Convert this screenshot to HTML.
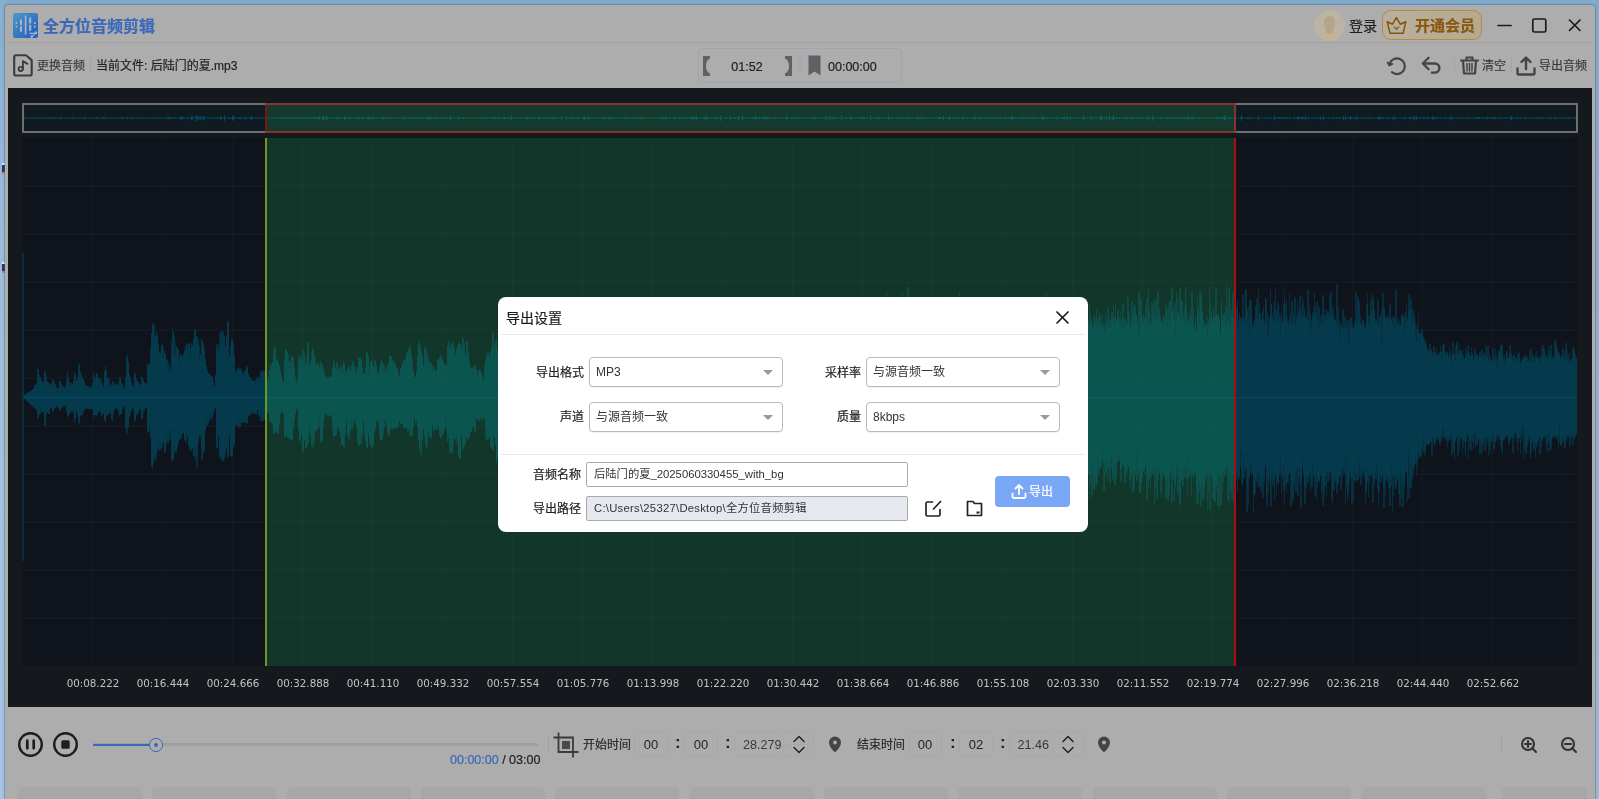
<!DOCTYPE html>
<html lang="zh-CN"><head><meta charset="utf-8"><title>全方位音频剪辑</title>
<style>
*{box-sizing:border-box;margin:0;padding:0}
html,body{width:1599px;height:799px;overflow:hidden}
body{background:#82acce;font-family:"Liberation Sans","Noto Sans CJK SC",sans-serif;font-size:12px;color:#222;position:relative}
.abs,.win *{position:absolute}
.win{position:absolute;left:5px;top:5px;width:1590px;height:810px;background:#adadad;border-radius:4px;box-shadow:0 0 0 1px rgba(70,110,150,.35),0 0 3px rgba(40,80,120,.4)}
.edgeL{position:absolute;left:0;top:0;width:6px;height:799px;background:linear-gradient(180deg,#87adcf 0,#8fb4d6 12%,#9dbcdc 30%,#a3c1e1 55%,#a6c4e4 100%)}
.edgeR{position:absolute;left:1594px;top:0;width:5px;height:799px;background:linear-gradient(180deg,#80aacd 0,#8fb2d3 50%,#9fbad5 100%)}
.mk{position:absolute;left:2px;width:3px;background:#27346b;border-top:2px solid #e8eef8;border-bottom:2px solid #c98a3a}
.t{white-space:nowrap;line-height:20px;height:20px}
.t,.nb,.col,.sel,.inp,.lab{will-change:transform}
.t{-webkit-text-stroke:.200px currentColor}
svg{position:absolute;overflow:visible}
.title{left:38px;top:12px;font-size:16px;font-weight:bold;color:#3b68b8;line-height:20px;letter-spacing:0}
.hr{left:3px;top:37px;width:1584px;height:1px;background:#a2a2a2}
.dark{left:3px;top:83px;width:1584px;height:619px;background:#15191d}
.lab span{position:absolute;top:0;width:80px;text-align:center;font-family:"DejaVu Sans","Liberation Sans",sans-serif;font-size:10.300px;color:#c2c2c2;line-height:14px}
.card{top:782px;width:124px;height:30px;border-radius:5px;background:#a7a7a7}
.nb{width:34px;height:24px;border:1px solid #a3a9b4;text-align:center;line-height:24px;font-size:13px;color:#222}
.col{font-size:17px;font-weight:bold;color:#222;line-height:24px}
.dlg{position:absolute;left:498px;top:297px;width:590px;height:235px;background:#fff;border-radius:8px}
.dlg *{position:absolute}
.sel{width:194px;height:30px;border:1px solid #b9b9b9;border-radius:4px;background:#fff;font-size:12px;line-height:29px;padding-left:6px;color:#333;box-shadow:0 1px 1px rgba(0,0,0,.06)}
.sel i{right:9px;top:12px;width:0;height:0;border-left:5px solid transparent;border-right:5px solid transparent;border-top:5px solid #999}
.lb{font-size:12px;color:#222;line-height:20px;text-align:right;width:80px}
.inp{width:322px;height:25px;border:1px solid #a9a9a9;border-radius:2px;font-size:11.300px;line-height:23px;padding-left:7px;color:#333;white-space:nowrap}
</style></head><body>
<div class="edgeL"></div><div class="edgeR"></div><div class="mk" style="top:163px;height:11px"></div><div class="mk" style="top:262px;height:11px"></div>
<div class="win">
  <!-- title bar -->
  <svg style="left:8px;top:8px" width="25" height="25" viewBox="0 0 25 25"><defs><linearGradient id="lg" x1="0" y1="0" x2="1" y2="1"><stop offset="0" stop-color="#4a9bc8"/><stop offset="1" stop-color="#2258b8"/></linearGradient></defs><rect width="25" height="25" rx="2.5" fill="url(#lg)"/><g fill="#a9b4c8"><rect x="2.6" y="9" width="1.6" height="2"/><rect x="2.6" y="12.6" width="1.6" height="2"/><rect x="7" y="6.5" width="2" height="5.5"/><rect x="7" y="13.2" width="2" height="5.5"/><rect x="11.8" y="2.5" width="1.6" height="19"/><rect x="16.2" y="4.5" width="2" height="6"/><rect x="16.2" y="11.8" width="2" height="6"/><rect x="21" y="9" width="1.6" height="2"/><rect x="21" y="12.6" width="1.6" height="2"/></g><g stroke="#dfe6f2" stroke-width="0.8" fill="none"><path d="M16.5 20.3h4.5M19 24l3-3.6"/><circle cx="22.8" cy="19.8" r="1"/><circle cx="18.6" cy="23.6" r="0.8"/></g></svg>
  <div class="t title">全方位音频剪辑</div>
  <div class="hr"></div>
  <!-- user / vip -->
  <svg style="left:1308.500px;top:5px" width="31" height="31" viewBox="0 0 31 31"><defs><clipPath id="av"><circle cx="15.500" cy="15.500" r="15.500"/></clipPath></defs><circle cx="15.500" cy="15.500" r="15.500" fill="#bbb3a5"/><g clip-path="url(#av)"><path d="M6 31c0-5 3-7.500 6.500-8.500l1-1.500h4l1 1.500c3.500 1 6.500 3.500 6.500 8.500z" fill="#c2b493"/><ellipse cx="15.500" cy="12.800" rx="5.800" ry="6.800" fill="#b5a584"/><path d="M11.500 17h8v5.500l-4 2-4-2z" fill="#b5a584"/></g></svg>
  <div class="t" style="left:1344px;top:11px;font-size:14px;color:#1e1e1e">登录</div>
  <div style="left:1377px;top:5px;width:100px;height:30px;border:1px solid #b98a3c;border-radius:9px;background:linear-gradient(90deg,#b8b09f,#b5a98f)"></div>
  <svg style="left:1381px;top:11px" width="21" height="19" viewBox="0 0 21 19" fill="none" stroke="#86540e" stroke-width="1.500" stroke-linejoin="round" stroke-linecap="round"><path d="M1.300 5.700l5.200 2.500 3.900-6.600 3.900 6.600 5.500-2.500-2.600 11.600h-13.200z"/><path d="M8.200 10.800l2.200 2.600 2.400-2.600" stroke-width="1.200"/></svg>
  <div class="t" style="left:1410px;top:11px;font-size:15px;font-weight:bold;color:#87560f">开通会员</div>
  <svg style="left:1492px;top:13px" width="90" height="16" viewBox="0 0 90 16" fill="none" stroke="#1c1c1c" stroke-width="1.700" stroke-linecap="round"><path d="M1 7.500h13"/><rect x="35.800" y="1" width="13" height="13" rx="1.500"/><path d="M72.500 2l10.500 10.500M83 2l-10.500 10.500"/></svg>
  <!-- toolbar left -->
  <svg style="left:8px;top:49px" width="20" height="23" viewBox="0 0 20 23" fill="none" stroke="#3b3c40" stroke-width="2.1" stroke-linejoin="round"><path d="M3 1.300h10l5.700 4.800v13.600a1.800 1.800 0 0 1-1.800 1.800h-13.900a1.800 1.800 0 0 1-1.800-1.800v-16.600a1.800 1.800 0 0 1 1.800-1.800z"/><circle cx="7.700" cy="15" r="2.100" stroke-width="1.900"/><path d="M9.900 15v-7.800l4.600 2.600" stroke-width="1.900" stroke-linecap="round"/></svg>
  <div class="t" style="left:32px;top:51px;color:#3c3c3c">更换音频</div>
  <div style="left:85px;top:53px;width:1px;height:15px;background:#a0a0a0"></div>
  <div class="t" style="left:91px;top:51px;color:#1e1e1e">当前文件: 后陆门的夏.mp3</div>
  <!-- toolbar center -->
  <div style="left:693px;top:43px;width:204px;height:35px;border:1px solid #a2a4ae;border-radius:4px"></div>
  <svg style="left:698px;top:51px" width="10" height="20" viewBox="0 0 10 20" fill="#5f6166"><path d="M0 0h7v2.500c-3 1.500-4 4-4 7.500s1 6 4 7.500v2.500h-7z"/></svg>
  <div class="t" style="left:712px;top:52px;width:60px;text-align:center;font-size:12.500px;color:#222">01:52</div>
  <svg style="left:779px;top:51px" width="10" height="20" viewBox="0 0 10 20" fill="#5f6166"><path d="M8 0h-7v2.500c3 1.500 4 4 4 7.500s-1 6-4 7.500v2.500h7z"/></svg>
  <div style="left:794px;top:51px;width:2px;height:19px;background:#a6a8ae"></div>
  <svg style="left:803px;top:50px" width="13" height="21" viewBox="0 0 13 21" fill="#5f6166"><path d="M0.500 0.500h12v20l-6-4-6 4z"/></svg>
  <div class="t" style="left:823px;top:52px;font-size:12.500px;color:#222">00:00:00</div>
  <!-- toolbar right -->
  <svg style="left:1381px;top:50px" width="22" height="22" viewBox="0 0 22 22" fill="none" stroke="#434448" stroke-width="2.200" stroke-linecap="round" stroke-linejoin="round"><path d="M3.400 9.600a7.800 7.800 0 1 1 2.600 7.600"/><path d="M1.700 7.500l1.600 2.900 2.900-1.500" stroke-width="1.900"/></svg>
  <svg style="left:1416px;top:50px" width="22" height="22" viewBox="0 0 22 22" fill="none" stroke="#434448" stroke-width="2.300" stroke-linecap="round" stroke-linejoin="round"><path d="M7.600 2.800l-5.800 5.700 5.800 5.700"/><path d="M2.600 8.500h11.200a4.600 4.600 0 0 1 0 9.200h-3"/></svg>
  <div style="left:1449px;top:53px;width:1px;height:15px;background:#a3a3a3"></div>
  <svg style="left:1455px;top:51px" width="19" height="19" viewBox="0 0 19 19" fill="none" stroke="#434448" stroke-width="2.200" stroke-linecap="round" stroke-linejoin="round"><path d="M1 4.500h17M6.500 4v-2.500h6v2.500M3 4.500l1 13h11l1-13"/><path d="M7 7.500v7.500M9.500 7.500v7.500M12 7.500v7.500" stroke-width="1.500"/></svg>
  <div class="t" style="left:1477px;top:51px;color:#3c3c3c">清空</div>
  <div style="left:1506px;top:53px;width:1px;height:15px;background:#a3a3a3"></div>
  <svg style="left:1511px;top:51px" width="20" height="20" viewBox="0 0 20 20" fill="none" stroke="#434448" stroke-width="2.400" stroke-linecap="round" stroke-linejoin="round"><path d="M10 13v-11M5.500 6l4.500-4.500 4.500 4.500M1.500 12.500v4.500a1.500 1.500 0 0 0 1.500 1.500h14a1.500 1.500 0 0 0 1.500-1.500v-4.500"/></svg>
  <div class="t" style="left:1534px;top:51px;color:#3c3c3c">导出音频</div>

  <!-- dark waveform panel -->
  <div class="dark"></div>
  <div class="lab" style="left:-5px;top:671px;width:1599px;height:14px"><span style="left:53px">00:08.222</span><span style="left:123px">00:16.444</span><span style="left:193px">00:24.666</span><span style="left:263px">00:32.888</span><span style="left:333px">00:41.110</span><span style="left:403px">00:49.332</span><span style="left:473px">00:57.554</span><span style="left:543px">01:05.776</span><span style="left:613px">01:13.998</span><span style="left:683px">01:22.220</span><span style="left:753px">01:30.442</span><span style="left:823px">01:38.664</span><span style="left:893px">01:46.886</span><span style="left:963px">01:55.108</span><span style="left:1033px">02:03.330</span><span style="left:1103px">02:11.552</span><span style="left:1173px">02:19.774</span><span style="left:1243px">02:27.996</span><span style="left:1313px">02:36.218</span><span style="left:1383px">02:44.440</span><span style="left:1453px">02:52.662</span></div>
  <!-- bottom controls -->
  <svg style="left:12px;top:726px" width="62" height="27" viewBox="0 0 62 27" fill="none" stroke="#1e1e1e" stroke-width="2.400"><circle cx="13.500" cy="13.500" r="11.300"/><circle cx="48.500" cy="13.500" r="11.300"/><path d="M10.300 9.700v7.600M16.700 9.700v7.600" stroke-linecap="round" stroke-width="2.700"/><rect x="44.300" y="9.300" width="8.400" height="8.400" rx="1.500" fill="#1e1e1e" stroke="none"/></svg>
  <div style="left:88px;top:738px;width:445px;height:3px;background:#9f9f9f;border-radius:2px"></div>
  <div style="left:88px;top:739px;width:58px;height:2px;background:#3c68b8"></div>
  <svg style="left:143px;top:732px" width="16" height="16" viewBox="0 0 16 16"><circle cx="8" cy="8" r="6.600" fill="#adadad" stroke="#3c68b8" stroke-width="1"/><circle cx="8" cy="8" r="2" fill="#3c68b8"/></svg>
  <div class="t" style="left:445px;top:745px;font-size:12.500px;color:#222"><span style="position:static;color:#3c68b8">00:00:00</span> / 03:00</div>
  <div style="left:543px;top:729px;width:1px;height:20px;background:#a0a0a0"></div>
  <svg style="left:548px;top:727px" width="26" height="26" viewBox="0 0 26 26" fill="none" stroke="#3a3a3a" stroke-width="1.800"><path d="M5.500 0.500v19.500h20M0.500 5.500h19.500v20"/><rect x="9" y="9" width="8" height="8" fill="#4a4a4a" stroke="none"/></svg>
  <div class="t" style="left:578px;top:730px;color:#2a2a2a">开始时间</div>
  <div class="nb" style="left:629px;top:727px">00</div><div class="col" style="left:670px;top:726px">:</div>
  <div class="nb" style="left:679px;top:727px">00</div><div class="col" style="left:720px;top:726px">:</div>
  <div class="nb" style="left:729px;top:727px;width:80px;text-align:left;padding-left:8px;font-size:12.600px;color:#3a3a3a">28.279</div>
  <div style="left:778px;top:727px;width:1px;height:24px;background:#a4a9b3"></div><div style="left:779px;top:739px;width:29px;height:1px;background:#a4a9b3"></div>
  <svg style="left:787px;top:730px" width="14" height="19" viewBox="0 0 14 19" fill="none" stroke="#222" stroke-width="1.500" stroke-linecap="round" stroke-linejoin="round"><path d="M2 6.500l5-5 5 5M2 12.500l5 5 5-5"/></svg>
  <svg style="left:823px;top:731px" width="14" height="17" viewBox="0 0 14 17"><path d="M7 0.500a6 6 0 0 1 6 6c0 4.500-6 10-6 10s-6-5.500-6-10a6 6 0 0 1 6-6z" fill="#444"/><circle cx="7" cy="6.500" r="2" fill="#adadad"/></svg>
  <div class="t" style="left:852px;top:730px;color:#2a2a2a">结束时间</div>
  <div class="nb" style="left:903px;top:727px">00</div><div class="col" style="left:945px;top:726px">:</div>
  <div class="nb" style="left:954px;top:727px">02</div><div class="col" style="left:995px;top:726px">:</div>
  <div class="nb" style="left:1004px;top:727px;width:75px;text-align:left;padding-left:7.500px;font-size:12.600px;color:#3a3a3a">21.46</div>
  <div style="left:1048px;top:727px;width:1px;height:24px;background:#a4a9b3"></div><div style="left:1049px;top:739px;width:29px;height:1px;background:#a4a9b3"></div>
  <svg style="left:1056px;top:730px" width="14" height="19" viewBox="0 0 14 19" fill="none" stroke="#222" stroke-width="1.500" stroke-linecap="round" stroke-linejoin="round"><path d="M2 6.500l5-5 5 5M2 12.500l5 5 5-5"/></svg>
  <svg style="left:1092px;top:731px" width="14" height="17" viewBox="0 0 14 17"><path d="M7 0.500a6 6 0 0 1 6 6c0 4.500-6 10-6 10s-6-5.500-6-10a6 6 0 0 1 6-6z" fill="#444"/><circle cx="7" cy="6.500" r="2" fill="#adadad"/></svg>
  <div style="left:1496px;top:730px;width:1px;height:19px;background:#a0a0a0"></div>
  <svg style="left:1515px;top:731px" width="60" height="18" viewBox="0 0 60 18" fill="none" stroke="#333" stroke-width="2.100" stroke-linecap="round"><circle cx="8" cy="8" r="6"/><path d="M12.500 12.500l3.500 3.500M5 8h6M8 5v6"/><circle cx="48" cy="8" r="6"/><path d="M52.500 12.500l3.500 3.500M45 8h6"/></svg>
  <div class="card" style="left:13.0px"></div><div class="card" style="left:147.3px"></div><div class="card" style="left:281.7px"></div><div class="card" style="left:416.0px"></div><div class="card" style="left:550.4px"></div><div class="card" style="left:684.8px"></div><div class="card" style="left:819.1px"></div><div class="card" style="left:953.4px"></div><div class="card" style="left:1087.8px"></div><div class="card" style="left:1222.1px"></div><div class="card" style="left:1356.5px"></div><div class="card" style="left:1496.500px;width:85px"></div>
</div>

<!-- waveform svg in page coords -->
<svg style="left:0;top:0" width="1599" height="799" viewBox="0 0 1599 799">
  <defs>
    <path id="wa" d="M23 397V395.9h1V395.1h1V394.2h1V393.5h1V392.7h1V392h1V391.4h1V390.9h1V390.3h1V389.7h1V388.7h1V385.2h1V385.5h1V383.7h1V368.5h1V369.6h1V374.9h1V377.3h1V380.4h1V381.6h1V381.2h1V371.8h1V371.1h1V377.3h1V381.6h1V382.3h1V382.9h1V385.1h1V383.6h1V379.3h1V380.1h1V382.3h1V385h1V386.7h1V388.1h1V388.1h1V380.8h1V380.7h1V384h1V385.7h1V386.4h1V386.8h1V387.7h1V380.6h1V371.9h1V377.6h1V382.2h1V382.3h1V383h1V383.7h1V380.9h1V371.8h1V374.2h1V379.8h1V377.6h1V363h1V365.6h1V374.3h1V374.3h1V377.6h1V378.9h1V381h1V384.8h1V385.5h1V385.6h1V386h1V387.1h1V387.6h1V387.1h1V384.9h1V373.4h1V375.9h1V377.7h1V373.2h1V374.4h1V377.5h1V378.2h1V379.3h1V379.6h1V383.2h1V386.4h1V369.9h1V366.6h1V371.1h1V378.2h1V377.6h1V380.5h1V386.7h1V384h1V381.3h1V381.8h1V381.9h1V383.8h1V384.8h1V384.6h1V382.7h1V376.6h1V378.2h1V382.4h1V383.4h1V385.9h1V388.4h1V377.4h1V357.8h1V355.5h1V361.5h1V374.5h1V377.8h1V382.1h1V385h1V386.5h1V372.3h1V374.3h1V378.4h1V382.4h1V381.7h1V384.2h1V384.3h1V376.7h1V377.6h1V379.9h1V382.4h1V383h1V383.7h1V364.4h1V364h1V365h1V349.8h1V333.4h1V324.1h1V324.8h1V325.1h1V337h1V332h1V335.3h1V343.8h1V351.9h1V353.2h1V344.4h1V345.6h1V346.8h1V351.1h1V354.4h1V359.3h1V360.7h1V362.3h1V365.2h1V369.9h1V351.9h1V327.6h1V331.8h1V335.4h1V342.8h1V347.1h1V348h1V349.3h1V356.6h1V354.3h1V356.6h1V355.9h1V354.2h1V349.4h1V346.7h1V343.7h1V344.1h1V343.9h1V343.8h1V348h1V342.9h1V344.7h1V338.1h1V329.9h1V328.9h1V335.9h1V336.9h1V339.3h1V346.1h1V354.3h1V338.8h1V340.5h1V343.1h1V348.7h1V358.2h1V366.7h1V371.2h1V372.9h1V373.9h1V374.5h1V375.5h1V377.2h1V381.7h1V385.9h1V375.3h1V344.4h1V348.3h1V345.6h1V334.3h1V331.3h1V331.4h1V331.7h1V332h1V335.2h1V345.4h1V336.5h1V323.1h1V320.6h1V355.8h1V356.3h1V337.7h1V339.5h1V342.4h1V356h1V371.4h1V371.1h1V368.8h1V367.7h1V366.9h1V367.9h1V370h1V372.8h1V372.5h1V371.8h1V369.9h1V365h1V367.1h1V373.9h1V376.4h1V377.7h1V378.5h1V380.1h1V381.2h1V380.7h1V379.8h1V378.9h1V377.3h1V376.8h1V376.8h1V371.8h1V370.3h1V370.1h1V370.9h1V370.8h1V371.7h1V376.2h1V380.4h1V376.1h1V370.8h1V363.7h1V365.3h1V361.8h1V349.6h1V345.7h1V348.5h1V359h1V359h1V362.4h1V365.5h1V370.6h1V376.7h1V381.1h1V383h1V358.8h1V349.1h1V350.9h1V353.7h1V354.6h1V360.2h1V361.8h1V355.9h1V356.9h1V356.5h1V367.7h1V376.9h1V382.7h1V379.1h1V358.2h1V354.8h1V355.7h1V357.6h1V348.8h1V349.8h1V353.7h1V364.6h1V356.8h1V342.5h1V342.8h1V363.7h1V361.2h1V352h1V349.3h1V349.1h1V355.6h1V356.6h1V364h1V362.8h1V364.1h1V367.4h1V361.2h1V368.8h1V364.6h1V368.6h1V374.1h1V377.1h1V379.3h1V376.7h1V377.2h1V376.8h1V377.3h1V374.6h1V367.8h1V359.4h1V360.7h1V367.8h1V372h1V363.1h1V370h1V368.7h1V365.5h1V368.1h1V364.7h1V361.6h1V363.3h1V370.2h1V369.4h1V370.1h1V365.7h1V367.5h1V370.7h1V365.1h1V360.8h1V362.8h1V366.2h1V367.7h1V371.1h1V367.4h1V357.8h1V358h1V357.4h1V361.1h1V368.2h1V373.5h1V373.7h1V367.4h1V351.6h1V352.6h1V356.5h1V366.4h1V362.7h1V360.4h1V361.6h1V367.3h1V359.6h1V360.8h1V365.5h1V372.2h1V371.2h1V368.2h1V364.5h1V359.9h1V361.7h1V363.9h1V365.7h1V371.4h1V368.4h1V365.3h1V361.7h1V355.3h1V355.9h1V356.3h1V359h1V361.5h1V362.3h1V364.5h1V367.2h1V368.2h1V371.2h1V376.1h1V368.5h1V366.9h1V363.6h1V360.2h1V359.5h1V357h1V352.2h1V351.2h1V349.5h1V346.1h1V346.8h1V354.2h1V361.7h1V370.5h1V376.9h1V376.4h1V371.3h1V355.2h1V344.1h1V341.7h1V345.8h1V352h1V355.6h1V366.2h1V347.8h1V347.7h1V349.1h1V354h1V368.4h1V361.4h1V363h1V364h1V365.3h1V366.5h1V369.5h1V371.4h1V369h1V360.2h1V359.5h1V357.3h1V356h1V357.1h1V360.2h1V361.8h1V364.2h1V364.4h1V364.9h1V345.7h1V345.1h1V341.6h1V346.8h1V344.4h1V341.5h1V342.4h1V348.9h1V353.5h1V349.1h1V344.8h1V343.9h1V343.9h1V343.4h1V347h1V336.5h1V339.1h1V342.2h1V354.7h1V340.2h1V340.6h1V351.4h1V360.5h1V366.1h1V368.3h1V367.4h1V366h1V364.2h1V367.2h1V370.3h1V374.2h1V371h1V369.4h1V369.3h1V372.6h1V376.8h1V380h1V364.4h1V360.2h1V354.3h1V351.3h1V352.8h1V356.7h1V352.6h1V348h1V333.4h1V331.3h1V345.4h1V340.2h1V339.7h1V348.2h1V357h1V359.9h1V354.2h1V354.2h1V357.1h1V356.2h1V359.3h1V356.8h1V345.7h1V345.7h1V354.4h1V358h1V356.3h1V356.3h1V356.8h1V356.6h1V355.3h1V358.2h1V360.9h1V361.6h1V352.6h1V352.6h1V355.9h1V333.7h1V333.7h1V346.6h1V353.9h1V341.2h1V334.8h1V348.5h1V355.8h1V359.3h1V359.4h1V335.3h1V335.3h1V347.7h1V337.6h1V337.6h1V346.7h1V352.5h1V346.1h1V346.1h1V353.5h1V342.4h1V350.4h1V354.3h1V357.8h1V332.5h1V342.2h1V339h1V339h1V348.1h1V332.6h1V349.6h1V336.6h1V344.9h1V338.5h1V342.8h1V349.7h1V343.5h1V348.3h1V349.1h1V357.3h1V352.8h1V337h1V345.8h1V350.8h1V352.1h1V352.1h1V353.9h1V352.7h1V350.5h1V347.1h1V347.1h1V350.3h1V354.4h1V354.5h1V350.9h1V350.2h1V349.9h1V352.2h1V351.1h1V337.6h1V345.3h1V348.8h1V353.3h1V354.5h1V350.5h1V349.2h1V354h1V353.6h1V345.4h1V349.2h1V348h1V334.2h1V334.2h1V345.8h1V327.5h1V338.5h1V345.5h1V349.9h1V352.7h1V332.3h1V342.4h1V334.5h1V344.1h1V323.3h1V323.3h1V334.3h1V341.7h1V346.6h1V342.9h1V334.9h1V332.9h1V343.9h1V341.2h1V346.5h1V340.8h1V340.8h1V347.1h1V345.7h1V351.5h1V345.1h1V348.7h1V339.5h1V339.5h1V346.7h1V335h1V335h1V351.7h1V324.2h1V342.3h1V359.5h1V350.4h1V351.5h1V351.1h1V332.2h1V332.2h1V321.7h1V333.5h1V340.2h1V333.4h1V333.4h1V340.8h1V340.8h1V345.2h1V324.5h1V324.5h1V341.8h1V349.3h1V348h1V348.6h1V347.5h1V319.5h1V319.5h1V334.4h1V342.7h1V343.7h1V349.8h1V317.3h1V317.3h1V335.8h1V336.1h1V336.1h1V342.9h1V326.9h1V326.9h1V342.7h1V344.8h1V342.8h1V341.2h1V338.9h1V338.9h1V356h1V338.9h1V344.7h1V346h1V327.9h1V327.9h1V336.5h1V342h1V327.3h1V327.3h1V323.6h1V334.2h1V335.6h1V340.8h1V319.6h1V319.6h1V329.8h1V336.8h1V340.1h1V336.4h1V339.7h1V345.7h1V328.5h1V336.8h1V342h1V344.6h1V348.5h1V340.6h1V339.1h1V316.9h1V316.9h1V330.3h1V338.3h1V339.1h1V320.7h1V320.7h1V331.6h1V332.7h1V352.4h1V338.7h1V342.6h1V331.3h1V335.4h1V327.6h1V327.6h1V335.2h1V340.2h1V340.9h1V344.8h1V346.5h1V323.9h1V337.8h1V349.6h1V339h1V345.9h1V338.6h1V342.2h1V343.8h1V316h1V316h1V329.9h1V315.4h1V315.4h1V333.8h1V339.1h1V336.6h1V340.6h1V315.4h1V315.4h1V329.4h1V337.5h1V341.9h1V343.2h1V329.9h1V329.9h1V336.3h1V336.3h1V337.7h1V328.5h1V327.6h1V332.6h1V337.3h1V338.6h1V326h1V326h1V333.4h1V336h1V341.5h1V335.5h1V320.8h1V320.8h1V330.1h1V330.1h1V340.3h1V339.7h1V337h1V336.7h1V336.7h1V316.2h1V326.2h1V332.9h1V337.4h1V315.2h1V315.2h1V327.2h1V334.6h1V338.3h1V339.6h1V339.5h1V338.5h1V336.6h1V338.2h1V334.7h1V337.7h1V332.3h1V332.3h1V313.6h1V328h1V335.9h1V322.7h1V338.9h1V339.9h1V315.3h1V315.3h1V327.7h1V315.1h1V315.1h1V326.2h1V347.2h1V333.7h1V334h1V339.3h1V332.6h1V337.5h1V332h1V334.4h1V332.2h1V332.2h1V335.4h1V339.2h1V331.8h1V325.2h1V325.2h1V329.4h1V335.8h1V338.6h1V340.6h1V306h1V318.4h1V326.7h1V330h1V336.2h1V309.8h1V309.8h1V333.6h1V335.5h1V354.9h1V337h1V327.9h1V321.7h1V321.7h1V329.4h1V318.8h1V318.8h1V328.2h1V330.9h1V322.1h1V312.9h1V341h1V325.9h1V325.9h1V334.6h1V339.3h1V319h1V319h1V343.9h1V324.1h1V324.1h1V346.1h1V322.4h1V322.4h1V330.1h1V329.3h1V339h1V338.5h1V327h1V303.3h1V303.3h1V325.4h1V328.5h1V328.5h1V334.1h1V332.7h1V309.8h1V322.4h1V330h1V327.9h1V332.8h1V327.4h1V336.7h1V324.6h1V330.7h1V326.9h1V302.7h1V326.6h1V332.7h1V307.1h1V307.1h1V319.3h1V298.6h1V322.6h1V332.7h1V328.2h1V327.7h1V329.4h1V291h1V338.6h1V320.4h1V331.6h1V333.7h1V331.8h1V329.3h1V331.2h1V335.5h1V326.2h1V335.9h1V334.1h1V331.6h1V325.8h1V321.7h1V327h1V292h1V313.6h1V323.1h1V329h1V326.8h1V286h1V289h1V327.9h1V331.9h1V332.7h1V308.6h1V324h1V322.3h1V325.1h1V332.3h1V333.2h1V328.6h1V326.2h1V331.2h1V325.9h1V308.2h1V320.3h1V306h1V318.7h1V326.4h1V330.4h1V317.5h1V309.9h1V302h1V302h1V313.7h1V323.4h1V324.5h1V330.4h1V328.7h1V331.7h1V333.1h1V324h1V326h1V299.1h1V299.1h1V311.8h1V320.3h1V300.9h1V295.9h1V312h1V313.9h1V313.9h1V322h1V326.1h1V307.5h1V327.9h1V317h1V323.4h1V327.8h1V330.8h1V305.4h1V292h1V325.7h1V330h1V324.9h1V319.4h1V316h1V323h1V326.6h1V325.6h1V324.1h1V331.3h1V304.3h1V304.3h1V318.3h1V303.8h1V316.8h1V324.6h1V327h1V309.5h1V319.5h1V325.8h1V326.2h1V316h1V316h1V326.5h1V323.7h1V324.9h1V325.7h1V306.5h1V306.5h1V326h1V323h1V329.7h1V328h1V331.5h1V315.3h1V331.1h1V317.9h1V323.9h1V323.5h1V327h1V329.5h1V325.6h1V302.7h1V302.7h1V316.4h1V324.5h1V335.6h1V326.8h1V320.6h1V320.6h1V321h1V321h1V339.1h1V310.8h1V310.8h1V318.7h1V335.7h1V311.3h1V313.3h1V298.5h1V311h1V319.3h1V324.8h1V328.4h1V324.5h1V328.3h1V297.7h1V297.7h1V310h1V318.2h1V323.8h1V308.2h1V301.1h1V317.9h1V325.9h1V323h1V322.6h1V314.3h1V327.6h1V296.1h1V296.1h1V315h1V324.7h1V320h1V320h1V328.9h1V293h1V311.3h1V320.6h1V320.4h1V320.5h1V323.2h1V322.2h1V326.1h1V322.1h1V322.1h1V320.8h1V310.8h1V310.8h1V320.7h1V324.4h1V322.2h1V306.9h1V306.9h1V338.1h1V326.1h1V320.3h1V322.2h1V322.6h1V321.6h1V323.6h1V324.1h1V326h1V318.6h1V301.6h1V294h1V313.4h1V313.4h1V321.1h1V316.3h1V316.3h1V318.4h1V328.2h1V310.6h1V310.6h1V320.9h1V323.1h1V310.1h1V318.8h1V302.4h1V313.4h1V320.2h1V324.5h1V327.2h1V314.8h1V319.1h1V323.3h1V317.2h1V317.2h1V324.3h1V325.3h1V327h1V314.7h1V323.3h1V333.1h1V313.6h1V320.8h1V307.6h1V307.6h1V319.1h1V325.6h1V320.8h1V319.6h1V318.7h1V326.6h1V317.6h1V321.5h1V319.4h1V320.6h1V322.9h1V311h1V319.5h1V304.1h1V304.1h1V332.3h1V319.6h1V324.8h1V297.5h1V297.5h1V312.6h1V330.3h1V301h1V301h1V326.9h1V306.2h1V306.2h1V315h1V320.7h1V290.7h1V290.7h1V308.1h1V318h1V323.1h1V314.1h1V318.1h1V311.6h1V298.5h1V298.5h1V310.3h1V312.3h1V322.6h1V325.6h1V314.8h1V304.3h1V300.2h1V300.2h1V318.3h1V319.4h1V315.1h1V316.5h1V321.8h1V321.3h1V318.5h1V315.5h1V315.1h1V304.7h1V304.7h1V310.1h1V303.4h1V300.2h1V300.2h1V287.8h1V287.8h1V308.4h1V319.1h1V333.2h1V318.7h1V298.3h1V311.3h1V288.2h1V288.2h1V300.9h1V321.6h1V316.6h1V307.8h1V290.4h1V304.3h1V313.4h1V319.4h1V322.2h1V325.6h1V291.9h1V291.9h1V305.6h1V329.4h1V316.1h1V333.9h1V294.7h1V312.3h1V291h1V291h1V294.2h1V311h1V320h1V320.7h1V327h1V324.8h1V339h1V326.2h1V286.8h1V302.1h1V312h1V324.5h1V307.4h1V317.1h1V289.3h1V289.3h1V316.8h1V316h1V318.2h1V330.9h1V299h1V320.9h1V313.7h1V313.2h1V317.9h1V327.1h1V317.6h1V289h1V289h1V303.3h1V311.1h1V311.1h1V317.1h1V321.2h1V295h1V307.1h1V300.6h1V321.5h1V312.9h1V317.4h1V323.4h1V319.3h1V319.8h1V324.4h1V290h1V290h1V308.5h1V306.4h1V299.3h1V299.3h1V313.9h1V321.8h1V326h1V319.9h1V306h1V306h1V317.1h1V323.4h1V313.5h1V313.5h1V321.2h1V312.4h1V307.3h1V320.6h1V297.7h1V297.7h1V310.8h1V335.5h1V323.6h1V318h1V304.5h1V319h1V305.1h1V300.8h1V310.5h1V316.8h1V321.5h1V306.1h1V318.2h1V332.7h1V310.7h1V320.9h1V320.8h1V289.3h1V304.3h1V299.7h1V316.2h1V320.4h1V293.3h1V313.7h1V322.9h1V324.8h1V317h1V323.4h1V324.6h1V322.3h1V317h1V317h1V313.1h1V313.1h1V317.3h1V317.3h1V301.6h1V311.1h1V317.5h1V315h1V319.9h1V320h1V312.8h1V333.8h1V319.2h1V318.7h1V312.3h1V312.3h1V316h1V302.1h1V302.1h1V330.6h1V321.6h1V325.8h1V314.3h1V316.1h1V326.6h1V315.7h1V318.1h1V310.2h1V310.2h1V312.6h1V295.2h1V308.8h1V317.1h1V315.2h1V319.8h1V322.3h1V320.9h1V322.7h1V325.2h1V326h1V330.5h1V339.4h1V322.8h1V309h1V309h1V316.4h1V316.4h1V318.9h1V325.4h1V337.7h1V342.7h1V317.7h1V317.7h1V323.3h1V327.8h1V320.4h1V319.4h1V321.9h1V324.3h1V301.3h1V301.3h1V314.9h1V322.6h1V324.7h1V320.2h1V327.5h1V328.3h1V303.9h1V303.9h1V315.6h1V322.4h1V299.9h1V291.7h1V319.1h1V301.5h1V310.2h1V322.2h1V319h1V299.5h1V299.5h1V317.5h1V315.6h1V342.6h1V292.9h1V292.9h1V308h1V317.2h1V316.8h1V325.7h1V319.3h1V318.3h1V319.7h1V320.1h1V317.4h1V315.1h1V333h1V289.1h1V289.1h1V317.1h1V323.1h1V326.1h1V325h1V315h1V315h1V315.8h1V334.7h1V316.9h1V304.2h1V317.3h1V294.5h1V294.5h1V308h1V316.7h1V322.3h1V315.3h1V315.3h1V321.6h1V341.6h1V328.9h1V330.8h1V332.1h1V333h1V328.5h1V329h1V336.7h1V342h1V345.3h1V347.5h1V348.9h1V349.8h1V350.4h1V350.7h1V351.7h1V355.5h1V352.5h1V352.6h1V352.6h1V348h1V355.4h1V352.7h1V352.7h1V346.4h1V358.4h1V352h1V344h1V344h1V350.4h1V351.9h1V351.9h1V358h1V358.9h1V356.8h1V364.8h1V353.9h1V354.1h1V356.4h1V360.4h1V341.3h1V341.3h1V350.7h1V354.3h1V351h1V351h1V361.8h1V354.9h1V360h1V358.5h1V350.8h1V354.1h1V345.3h1V351.9h1V356.1h1V346.9h1V354.5h1V358.7h1V355.5h1V356.5h1V354.2h1V354.2h1V355.4h1V355.4h1V357.8h1V349.8h1V349.8h1V354.8h1V353.3h1V357.9h1V355.5h1V357.8h1V360.8h1V358.2h1V362.4h1V359.4h1V362.8h1V360.6h1V356.8h1V348.2h1V366.3h1V359.1h1V349.9h1V355.6h1V344.5h1V344.5h1V355.6h1V360.7h1V363h1V359.1h1V351h1V351h1V357.8h1V345h1V345h1V351.7h1V362.2h1V360.1h1V353.2h1V357.5h1V357.7h1V354.5h1V354.5h1V358.6h1V364.3h1V362.6h1V360.1h1V356h1V356h1V352.9h1V357h1V356.1h1V359.2h1V360.2h1V361.2h1V362.2h1V353.6h1V357.1h1V356h1V360.7h1V350.9h1V356.7h1V359.8h1V361.5h1V355.2h1V348.2h1V356.6h1V348.5h1V348.5h1V354.2h1V355.1h1V357.1h1V345.7h1V354.5h1V344.9h1V344.9h1V356.8h1V355.8h1V356.5h1V340.4h1V340.4h1V350h1V352.3h1V352.3h1V360.5h1V357.9h1V348.9h1V348.9h1V353.6h1V361.2h1V356.5h1V360.4h1V361.9h1V362h1V358.9h1V358.3h1V362.3h1V348.3h1V348.3h1V354h1V357.7h1V397V434.5h-1V432.5h-1V438.8h-1V432.6h-1V437.2h-1V437.7h-1V437.1h-1V436.9h-1V436.8h-1V436.6h-1V435.1h-1V439.1h-1V446.6h-1V439.4h-1V437.1h-1V445h-1V445h-1V425.4h-1V435.8h-1V440.8h-1V436.3h-1V436h-1V438h-1V437h-1V438.5h-1V449.3h-1V449.3h-1V434h-1V441.2h-1V435.1h-1V438.2h-1V443.4h-1V436.2h-1V437.4h-1V439.6h-1V439.8h-1V436.8h-1V435.8h-1V438h-1V441.4h-1V443.1h-1V443.1h-1V440.7h-1V449.8h-1V438.5h-1V440.4h-1V458.2h-1V439.4h-1V434.9h-1V440.3h-1V452.9h-1V452.9h-1V438.2h-1V426.9h-1V437.7h-1V443.3h-1V453.3h-1V438.5h-1V438.5h-1V450.9h-1V442.4h-1V434.3h-1V438.8h-1V454.5h-1V451.9h-1V436.9h-1V439h-1V441.2h-1V441.2h-1V434.2h-1V435.9h-1V438.5h-1V440.3h-1V440.4h-1V455h-1V451.5h-1V439.2h-1V436.7h-1V435h-1V442.2h-1V438.4h-1V440.1h-1V449.2h-1V449.2h-1V434.9h-1V434.1h-1V440.8h-1V450.5h-1V439.1h-1V441.7h-1V447.2h-1V451h-1V451h-1V439.2h-1V441.8h-1V447.5h-1V453.9h-1V453.9h-1V439.2h-1V443.6h-1V436h-1V432h-1V433.1h-1V440.3h-1V442.2h-1V450.7h-1V450.7h-1V437.7h-1V435h-1V434.2h-1V433.7h-1V456.6h-1V438.5h-1V440.7h-1V438.1h-1V436.6h-1V440.6h-1V450.5h-1V434.4h-1V440.4h-1V437.5h-1V441.6h-1V460h-1V452.6h-1V454.9h-1V454.9h-1V439.7h-1V438.8h-1V437.6h-1V438.6h-1V441.4h-1V438.3h-1V438.6h-1V427h-1V429.7h-1V440.8h-1V436.6h-1V442.5h-1V440.8h-1V438.2h-1V438.5h-1V438.3h-1V446.6h-1V438.8h-1V437.6h-1V442.1h-1V442.5h-1V443.8h-1V444h-1V444h-1V442.9h-1V455.8h-1V455.8h-1V435.7h-1V442h-1V447.9h-1V456.5h-1V457.1h-1V450.4h-1V460.5h-1V461.2h-1V464h-1V468.3h-1V474.7h-1V466.3h-1V476.1h-1V487.7h-1V498.7h-1V498.7h-1V501.8h-1V472.7h-1V473.2h-1V481.7h-1V497.3h-1V477.9h-1V498.8h-1V506.4h-1V506.4h-1V474h-1V480h-1V488.9h-1V488.9h-1V485.6h-1V496.4h-1V512.6h-1V466.7h-1V487.4h-1V487.4h-1V477.2h-1V478.1h-1V480.3h-1V494.4h-1V486.6h-1V486.6h-1V475.9h-1V477.1h-1V473.9h-1V474.3h-1V489.2h-1V489.2h-1V479.1h-1V470.7h-1V477.9h-1V478.4h-1V475.1h-1V473.3h-1V469.7h-1V475.2h-1V475.1h-1V480.9h-1V489.8h-1V503.3h-1V478.3h-1V474.3h-1V468h-1V471.3h-1V473.9h-1V477.1h-1V480.1h-1V481.5h-1V480.6h-1V470.7h-1V480.3h-1V470.2h-1V479h-1V479.1h-1V476.4h-1V483.4h-1V494.4h-1V494.4h-1V486.6h-1V503.4h-1V473.2h-1V473.9h-1V477.3h-1V489.5h-1V489.5h-1V476.6h-1V484.6h-1V484.6h-1V482h-1V482h-1V474.9h-1V484.9h-1V504.8h-1V477.8h-1V471.1h-1V480.4h-1V482.4h-1V482.4h-1V469.9h-1V475.5h-1V497.4h-1V505.4h-1V505.4h-1V477h-1V471.7h-1V479.8h-1V479h-1V487.5h-1V500.6h-1V479.7h-1V473.8h-1V476h-1V465.5h-1V479h-1V491h-1V479.1h-1V476h-1V479.4h-1V489h-1V504.4h-1V504.4h-1V476.3h-1V467.6h-1V507.5h-1V507.5h-1V468h-1V476.3h-1V469h-1V467.6h-1V472.4h-1V482.5h-1V482.3h-1V503.2h-1V480.6h-1V470.7h-1V474.1h-1V474h-1V480.8h-1V492h-1V475h-1V490.8h-1V490.8h-1V478.5h-1V469h-1V458.9h-1V476.1h-1V483.1h-1V480.5h-1V495.3h-1V474.8h-1V480.1h-1V480.1h-1V468.8h-1V472.8h-1V479.6h-1V463.4h-1V478.1h-1V478.7h-1V495.4h-1V466.9h-1V476.1h-1V475.7h-1V481.8h-1V491.3h-1V491.3h-1V477.1h-1V487.2h-1V487.2h-1V474h-1V479.1h-1V494h-1V494h-1V473.1h-1V475.8h-1V468.6h-1V478h-1V505.4h-1V512.6h-1V512.6h-1V468.6h-1V478h-1V478.4h-1V486.5h-1V471.7h-1V467.2h-1V476.3h-1V479.3h-1V472.9h-1V479.4h-1V473h-1V473h-1V474.6h-1V480.6h-1V490.6h-1V490.6h-1V502.6h-1V502.6h-1V499.5h-1V467.2h-1V476.3h-1V470.7h-1V470.9h-1V471.4h-1V474.8h-1V478.1h-1V509.8h-1V506.1h-1V506.1h-1V486h-1V501.9h-1V501.9h-1V485.1h-1V498.3h-1V471.5h-1V475.7h-1V469.1h-1V476.3h-1V469.3h-1V474.1h-1V477.7h-1V487.2h-1V487.2h-1V500.3h-1V480.4h-1V490.5h-1V491.6h-1V505.4h-1V488h-1V488h-1V471.4h-1V474.6h-1V482.1h-1V473.4h-1V473.9h-1V477.5h-1V477h-1V477.8h-1V457.7h-1V470.7h-1V470.8h-1V477.9h-1V486.2h-1V486.2h-1V480.6h-1V506h-1V475.7h-1V494.7h-1V494.7h-1V467.6h-1V486.8h-1V478h-1V480h-1V502.7h-1V502.7h-1V474.2h-1V494.8h-1V494.8h-1V475.9h-1V499.3h-1V499.3h-1V478h-1V473.4h-1V473.8h-1V497.4h-1V475.8h-1V473.7h-1V467h-1V481.8h-1V470.5h-1V469.9h-1V467.9h-1V474h-1V471.6h-1V477.8h-1V488.3h-1V475.8h-1V478.1h-1V476.2h-1V483.6h-1V466.4h-1V469.3h-1V471.3h-1V476h-1V482.9h-1V493.1h-1V493.1h-1V473h-1V482h-1V480.7h-1V474.2h-1V490h-1V490h-1V469.1h-1V472.7h-1V481.4h-1V481.4h-1V465.7h-1V471.6h-1V474.7h-1V483.3h-1V483.3h-1V463.9h-1V466.3h-1V481.3h-1V481.3h-1V461.1h-1V461.1h-1V462.1h-1V478.8h-1V478.8h-1V465h-1V473.3h-1V473.3h-1V457.7h-1V460.6h-1V465.5h-1V468.7h-1V466.9h-1V472.5h-1V476.3h-1V490.8h-1V490.8h-1V461.1h-1V465.5h-1V469.1h-1V473.2h-1V475h-1V475.2h-1V485h-1V485h-1V489.5h-1V489.5h-1V466.2h-1V495.2h-1V480.6h-1V473.6h-1V473.9h-1V475.3h-1V470h-1V482.3h-1V497.5h-1V497.5h-1V454.8h-1V468.6h-1V473h-1V473.1h-1V481h-1V493.6h-1V463.6h-1V473.5h-1V471.2h-1V472.6h-1V479.6h-1V484.4h-1V484.4h-1V465.7h-1V471h-1V465.7h-1V472h-1V482.3h-1V482.3h-1V473.7h-1V496.8h-1V496.8h-1V474.2h-1V489.3h-1V483.9h-1V483.9h-1V478.9h-1V467.7h-1V485.5h-1V485.5h-1V473.2h-1V472.4h-1V464.3h-1V472.9h-1V473.2h-1V475.5h-1V471.9h-1V474.8h-1V465.8h-1V461.1h-1V473.7h-1V469.1h-1V468h-1V471h-1V478.3h-1V478.3h-1V473.2h-1V463.1h-1V470.7h-1V496.8h-1V496.8h-1V465.8h-1V464.6h-1V468.7h-1V470.2h-1V483.5h-1V483.5h-1V467.8h-1V484.7h-1V484.7h-1V495.3h-1V495.3h-1V465.8h-1V470h-1V462.4h-1V472.9h-1V465.8h-1V470.6h-1V478.5h-1V491.2h-1V491.2h-1V468.6h-1V449.5h-1V472.1h-1V467.8h-1V472.8h-1V462.9h-1V464.4h-1V469.8h-1V476.1h-1V494.9h-1V494.9h-1V496.5h-1V496.5h-1V453.8h-1V474h-1V487.8h-1V462.9h-1V469.6h-1V467.7h-1V472.6h-1V481.2h-1V481.2h-1V470h-1V481.5h-1V481.5h-1V448.9h-1V470.9h-1V468.7h-1V474.5h-1V490.4h-1V490.4h-1V461.4h-1V460.9h-1V467.9h-1V472.4h-1V463.2h-1V462.1h-1V467.8h-1V450.5h-1V469.5h-1V486.8h-1V471.7h-1V463.3h-1V481.8h-1V461.4h-1V471.9h-1V471h-1V485.8h-1V471.7h-1V480.4h-1V471.3h-1V463.1h-1V464.3h-1V472.2h-1V472.2h-1V465.4h-1V468.4h-1V477h-1V492.1h-1V469.3h-1V471.2h-1V480.3h-1V468.6h-1V465h-1V489.4h-1V463.6h-1V470.8h-1V473.2h-1V482h-1V495.4h-1V466.9h-1V473.3h-1V463.9h-1V469.6h-1V479.7h-1V468.3h-1V468.1h-1V463h-1V468.3h-1V468.8h-1V465h-1V464h-1V465.5h-1V466.6h-1V478.9h-1V484.1h-1V475.7h-1V479.6h-1V479.6h-1V475.1h-1V493.1h-1V476.3h-1V476.3h-1V462h-1V468h-1V464.4h-1V467.6h-1V474.4h-1V484.8h-1V484.8h-1V468h-1V459.3h-1V462.4h-1V480.4h-1V459.4h-1V467.4h-1V474.3h-1V452.2h-1V478.4h-1V468.8h-1V480.1h-1V480.1h-1V465.2h-1V466h-1V468.5h-1V457.9h-1V462.1h-1V462.7h-1V463.8h-1V456.3h-1V475.4h-1V460.6h-1V461.8h-1V476.7h-1V476.7h-1V459.8h-1V467.2h-1V491.2h-1V491.2h-1V466.6h-1V469.4h-1V445.3h-1V462.8h-1V480.2h-1V467.9h-1V477.5h-1V461.7h-1V450.7h-1V476.4h-1V476.4h-1V458.8h-1V461.6h-1V463.6h-1V476.5h-1V491.9h-1V485h-1V463.1h-1V465.6h-1V462.2h-1V485.5h-1V485.5h-1V479.7h-1V459.1h-1V459.8h-1V456.5h-1V451.3h-1V458.3h-1V463.4h-1V472.6h-1V489h-1V489h-1V465.2h-1V465.2h-1V461.9h-1V467.8h-1V477h-1V483.3h-1V491.3h-1V468.8h-1V479.1h-1V479.1h-1V489.3h-1V468.5h-1V484.9h-1V484.9h-1V462.2h-1V465.4h-1V474.2h-1V451.2h-1V468.9h-1V468.9h-1V457.8h-1V461.4h-1V450.1h-1V460.1h-1V461.2h-1V454.8h-1V460.9h-1V440.8h-1V460.1h-1V455h-1V461.3h-1V462.8h-1V463.6h-1V478.9h-1V478.9h-1V452.4h-1V454h-1V460.3h-1V448.3h-1V452.3h-1V461.9h-1V457.8h-1V460.2h-1V481.8h-1V474.1h-1V474.1h-1V463.2h-1V463.2h-1V459.7h-1V475.7h-1V457.4h-1V465.3h-1V469.6h-1V469.6h-1V476.2h-1V476.2h-1V460.6h-1V456.4h-1V455.2h-1V455h-1V467.3h-1V467.3h-1V458.1h-1V460.5h-1V458.1h-1V454.6h-1V453.8h-1V458.1h-1V465.4h-1V477.8h-1V477.8h-1V484.9h-1V484.9h-1V480.3h-1V480.3h-1V462.5h-1V475.5h-1V459.4h-1V471.1h-1V482.5h-1V465h-1V481h-1V473.3h-1V473.3h-1V443h-1V457.6h-1V458.1h-1V452.4h-1V468.8h-1V449.7h-1V457h-1V456.2h-1V449.2h-1V451.9h-1V454.3h-1V456.1h-1V452.9h-1V453.5h-1V452.1h-1V444.1h-1V469.8h-1V469.8h-1V457.6h-1V457.4h-1V450.9h-1V454.6h-1V456.3h-1V453h-1V451.3h-1V454h-1V458.1h-1V463.9h-1V449.3h-1V459.7h-1V460h-1V482h-1V482h-1V446.8h-1V460.2h-1V456.7h-1V452.7h-1V453.6h-1V463.9h-1V463.9h-1V456.7h-1V455.2h-1V448.5h-1V450.6h-1V445.7h-1V447.3h-1V453.3h-1V451.6h-1V447.3h-1V452.8h-1V458.6h-1V476.9h-1V476.9h-1V455.4h-1V451.3h-1V451.9h-1V452.5h-1V450.2h-1V463.5h-1V473.3h-1V458.7h-1V480.8h-1V453.5h-1V450h-1V453.3h-1V447.2h-1V465.9h-1V477.3h-1V453.5h-1V452.1h-1V451.2h-1V446.3h-1V446.3h-1V452.8h-1V453.4h-1V449.6h-1V451.3h-1V445.5h-1V453.5h-1V450.4h-1V449.2h-1V450.5h-1V447.2h-1V446.2h-1V445.5h-1V448.4h-1V460.5h-1V449.5h-1V451.9h-1V452.4h-1V441.4h-1V451.9h-1V454.6h-1V462.6h-1V446.4h-1V445.5h-1V448.7h-1V453.1h-1V445.7h-1V448.2h-1V457h-1V477.9h-1V477.9h-1V451.2h-1V460.1h-1V460.1h-1V450h-1V452.4h-1V447h-1V475.6h-1V475.6h-1V452.3h-1V445h-1V450.3h-1V454.9h-1V450.1h-1V451.3h-1V445.5h-1V466.6h-1V466.6h-1V449.7h-1V441.2h-1V444.4h-1V448.4h-1V451.3h-1V447.2h-1V451.1h-1V463.8h-1V463.8h-1V455h-1V455h-1V447.8h-1V451.2h-1V466.2h-1V447h-1V444.5h-1V447.5h-1V451.4h-1V446.5h-1V447h-1V451.1h-1V457.4h-1V466.8h-1V466.8h-1V466.8h-1V447.7h-1V444.3h-1V447.1h-1V451.4h-1V451.4h-1V447h-1V452.1h-1V460.3h-1V460.3h-1V450.3h-1V459.9h-1V459.9h-1V444.4h-1V445.9h-1V450.2h-1V456.6h-1V455.7h-1V457h-1V470h-1V456.2h-1V443h-1V446.9h-1V440.5h-1V451.3h-1V451.3h-1V449.7h-1V460h-1V446.2h-1V454h-1V467.9h-1V467.9h-1V440.6h-1V439.5h-1V439.2h-1V441.9h-1V443.5h-1V443.5h-1V440.9h-1V442.7h-1V444.5h-1V444.4h-1V449.2h-1V449.5h-1V439.3h-1V442.5h-1V447h-1V458.3h-1V458.3h-1V443h-1V447.1h-1V453.6h-1V442.2h-1V438.9h-1V441.2h-1V442.8h-1V441.1h-1V450h-1V464.5h-1V440.3h-1V439.6h-1V429.5h-1V446.9h-1V446.9h-1V427.9h-1V437.1h-1V437.5h-1V442.5h-1V445.1h-1V453.1h-1V455h-1V455h-1V437.2h-1V437.6h-1V430.9h-1V430.6h-1V437.6h-1V440.4h-1V444.6h-1V451h-1V451h-1V444.7h-1V447.1h-1V454.3h-1V454.3h-1V442.7h-1V448.4h-1V440.3h-1V438.3h-1V443.6h-1V453.1h-1V443h-1V455.2h-1V439.6h-1V435.3h-1V437.1h-1V441h-1V447.2h-1V457.3h-1V436.6h-1V437.9h-1V442.2h-1V438.2h-1V437.5h-1V431.8h-1V435.9h-1V445.2h-1V445.2h-1V441.6h-1V436.6h-1V460.2h-1V460.2h-1V437h-1V432.7h-1V456.2h-1V456.2h-1V432.3h-1V434.1h-1V437.8h-1V437.2h-1V436.4h-1V444.8h-1V456.8h-1V456.8h-1V457.1h-1V457.1h-1V462.1h-1V445.4h-1V438h-1V451.1h-1V449.3h-1V447.8h-1V447.1h-1V437.4h-1V439.6h-1V440.8h-1V439.8h-1V428.3h-1V419.3h-1V417.2h-1V420.5h-1V419.9h-1V416.3h-1V420.2h-1V420.7h-1V420.2h-1V418.6h-1V431.8h-1V431.6h-1V425.7h-1V427.9h-1V431.1h-1V433.2h-1V437.2h-1V439.4h-1V438.8h-1V437.4h-1V442.4h-1V446.7h-1V448h-1V450.2h-1V434.5h-1V459h-1V457.8h-1V455.8h-1V443.4h-1V441.3h-1V439.4h-1V440.2h-1V444.4h-1V453.2h-1V453.3h-1V453.4h-1V452.8h-1V433.1h-1V442.3h-1V430.6h-1V426.1h-1V429.7h-1V433.6h-1V434.2h-1V437.9h-1V437.3h-1V435.3h-1V429.1h-1V422.4h-1V426.5h-1V429.8h-1V430.4h-1V431.4h-1V425.4h-1V437.3h-1V438.1h-1V435.9h-1V433.2h-1V446.8h-1V447.9h-1V443h-1V434.7h-1V429h-1V440.1h-1V453.6h-1V454.7h-1V451h-1V441.1h-1V427h-1V422.3h-1V423.2h-1V417h-1V426.9h-1V435.4h-1V435.9h-1V436h-1V436.6h-1V431h-1V431.9h-1V428.4h-1V426.9h-1V427.5h-1V426.6h-1V424h-1V424h-1V423.4h-1V421.8h-1V425.5h-1V428.6h-1V427.4h-1V428.5h-1V428.6h-1V428.2h-1V429.1h-1V420.1h-1V430.3h-1V434.5h-1V436.9h-1V433.1h-1V425.8h-1V420.3h-1V426.6h-1V434.4h-1V439.4h-1V440h-1V440.4h-1V436.8h-1V422.1h-1V419.1h-1V422.2h-1V429h-1V432.2h-1V444.2h-1V448h-1V446.4h-1V445.1h-1V444h-1V433.8h-1V448.3h-1V447.4h-1V440.2h-1V436.4h-1V420.9h-1V434.8h-1V444.3h-1V444.3h-1V446h-1V446.3h-1V443.4h-1V426.7h-1V424h-1V422.3h-1V426.5h-1V429.1h-1V428.6h-1V430.8h-1V440.1h-1V432.3h-1V435.8h-1V422.5h-1V432.7h-1V446.6h-1V445.6h-1V445h-1V444.5h-1V437h-1V431.3h-1V427.8h-1V431.3h-1V434.7h-1V435.9h-1V436.4h-1V436.4h-1V430.7h-1V415.4h-1V414.9h-1V415.6h-1V416.7h-1V415.7h-1V414.6h-1V412.4h-1V417.2h-1V428.3h-1V440.1h-1V441.5h-1V441.9h-1V427.4h-1V422.7h-1V429h-1V430.8h-1V433h-1V442.3h-1V445.2h-1V447.4h-1V446.1h-1V437.1h-1V431.6h-1V443h-1V445.4h-1V448.4h-1V448h-1V440.8h-1V450.6h-1V453.3h-1V435.4h-1V443.2h-1V440h-1V430h-1V408h-1V410.1h-1V414.5h-1V420.3h-1V428.2h-1V440.4h-1V439.5h-1V439h-1V438.8h-1V438.1h-1V438.3h-1V435.6h-1V437.3h-1V437.7h-1V413.4h-1V411.9h-1V411.6h-1V414h-1V423h-1V433.7h-1V431.2h-1V433.6h-1V431.8h-1V433.1h-1V433.5h-1V425.3h-1V421.6h-1V422.9h-1V421.5h-1V412.8h-1V412.9h-1V415h-1V418.3h-1V419.6h-1V420.3h-1V421.1h-1V420.9h-1V421h-1V416.7h-1V415.3h-1V410.4h-1V414.4h-1V413.5h-1V413.1h-1V413.1h-1V413.7h-1V414.1h-1V413.7h-1V415.4h-1V416h-1V423.2h-1V423.2h-1V422.6h-1V422.3h-1V422.6h-1V423h-1V421.6h-1V426.2h-1V427h-1V419.8h-1V427.3h-1V425.7h-1V425.1h-1V444.5h-1V448.1h-1V455.8h-1V457h-1V455.7h-1V437.6h-1V457.2h-1V458.1h-1V448.3h-1V454.3h-1V456.9h-1V459.2h-1V460.5h-1V460.6h-1V457.8h-1V455.4h-1V435.6h-1V448.5h-1V448.3h-1V407.3h-1V411.4h-1V415h-1V418h-1V419.8h-1V418.8h-1V420.1h-1V422.7h-1V425.3h-1V426.3h-1V429.6h-1V450.6h-1V453.8h-1V459.6h-1V459.5h-1V435.8h-1V435h-1V443.1h-1V467.7h-1V469h-1V461.2h-1V457.2h-1V456.1h-1V448.6h-1V449.2h-1V451.3h-1V449.1h-1V446.5h-1V437.1h-1V442.7h-1V441.8h-1V439.4h-1V433.2h-1V434.1h-1V436.5h-1V438.3h-1V439.3h-1V442.7h-1V447.2h-1V452.3h-1V451.5h-1V450.4h-1V460h-1V460.5h-1V459.5h-1V438.6h-1V440.2h-1V442.5h-1V443.1h-1V444.7h-1V452.3h-1V453.1h-1V442.3h-1V447.4h-1V447.6h-1V450.3h-1V449.6h-1V442.2h-1V450.7h-1V459.5h-1V459.8h-1V456.9h-1V462.9h-1V467.7h-1V466.4h-1V437.4h-1V431.8h-1V431.9h-1V432.3h-1V407h-1V408h-1V410.4h-1V412.9h-1V418.7h-1V419.3h-1V409.4h-1V409.1h-1V411.9h-1V413.8h-1V415.8h-1V419.5h-1V421h-1V408.8h-1V408h-1V411.1h-1V411.1h-1V418.1h-1V427.5h-1V425.9h-1V432.1h-1V427.4h-1V407.2h-1V407.3h-1V408.8h-1V413.9h-1V415.1h-1V415.9h-1V412.6h-1V409.6h-1V408.6h-1V408.6h-1V411h-1V414.6h-1V420.4h-1V418.8h-1V413.9h-1V412.9h-1V414.5h-1V415.4h-1V415.7h-1V422.2h-1V421.4h-1V413.1h-1V414.8h-1V416h-1V412.3h-1V411.3h-1V412.8h-1V415.1h-1V416h-1V414.8h-1V416.2h-1V417.7h-1V410.2h-1V408.9h-1V408.9h-1V408.8h-1V409h-1V409h-1V408.8h-1V408.9h-1V410.5h-1V412.9h-1V415h-1V415.3h-1V416h-1V422.7h-1V425.5h-1V414.1h-1V411h-1V418.8h-1V422.4h-1V413.2h-1V411.6h-1V411.7h-1V412.8h-1V413.7h-1V415.7h-1V417.2h-1V411.9h-1V406.9h-1V405.6h-1V405.5h-1V407.5h-1V408.8h-1V410.7h-1V410.4h-1V408.1h-1V406.3h-1V406.8h-1V407.4h-1V409h-1V410.7h-1V411.2h-1V407.8h-1V409h-1V414h-1V414h-1V412.1h-1V413.5h-1V426.2h-1V426.1h-1V412.3h-1V412.4h-1V412.8h-1V413.8h-1V414.4h-1V418h-1V417.8h-1V409.3h-1V409h-1V408.5h-1V407.4h-1V406.2h-1V405.1h-1V404.3h-1V403.3h-1V402.4h-1V401.4h-1V400.4h-1V399.6h-1V398.8h-1V398h-1Z"/><path id="wb" d="M23 397V395.9h1V395.1h1V394.3h1V393.5h1V393.4h1V392.2h1V391.5h1V392.3h1V390.4h1V389.6h1V388.7h1V385.1h1V384.4h1V383.7h1V369h1V370.3h1V377.5h1V377.4h1V379.9h1V383.3h1V385.1h1V371.5h1V371h1V381h1V382.1h1V382.9h1V383.5h1V384.6h1V383.8h1V381.4h1V379.6h1V382.6h1V384.5h1V387.7h1V388.3h1V388.1h1V381h1V380.6h1V383.6h1V385.6h1V386.8h1V387.3h1V387.7h1V380.5h1V371.7h1V377.7h1V386.9h1V385.6h1V383.1h1V384h1V381.1h1V372.5h1V374.2h1V380h1V377.3h1V363.8h1V364.1h1V370.8h1V374.1h1V377.6h1V379.3h1V381.4h1V384.8h1V385.9h1V386.6h1V386.2h1V387h1V387.6h1V387.2h1V383.1h1V374h1V381.4h1V377.6h1V372.7h1V374.5h1V377.7h1V378.3h1V384.3h1V380h1V383.4h1V386.2h1V372.4h1V366.8h1V370.7h1V378.3h1V377.3h1V384.5h1V386.6h1V383.9h1V380.8h1V385.6h1V383.8h1V383.5h1V384.9h1V384.7h1V382.6h1V380.8h1V377.5h1V382.6h1V387.6h1V386.2h1V388.4h1V377.5h1V357h1V354.2h1V362.2h1V374h1V378.2h1V384.3h1V385.3h1V388.1h1V372.5h1V373.9h1V380.6h1V380.2h1V382.9h1V384.3h1V386.7h1V376.2h1V377.2h1V379.8h1V382.5h1V383.1h1V385.5h1V364.2h1V366.2h1V364.1h1V348.6h1V332.9h1V323.3h1V325h1V335.2h1V336.3h1V331.5h1V335.3h1V344.3h1V352.5h1V352.7h1V345.4h1V344.3h1V356.9h1V351h1V354.4h1V359.4h1V361.1h1V372.5h1V365.7h1V371.2h1V340.1h1V347.9h1V331.9h1V355.1h1V354.5h1V346h1V348h1V349.9h1V364.6h1V354.1h1V355.8h1V357.4h1V354h1V350.8h1V345.7h1V342.9h1V350.6h1V344.5h1V342.3h1V358.4h1V343.8h1V344.8h1V338.7h1V329.2h1V330h1V336.3h1V344.7h1V338.4h1V361.9h1V353.8h1V340.1h1V341.2h1V343.6h1V350.2h1V358.7h1V365.6h1V370.5h1V372.8h1V373.4h1V377.2h1V376.2h1V377.5h1V382h1V385.9h1V375.2h1V344h1V348.8h1V343.9h1V349.7h1V333h1V343.6h1V330.1h1V338.6h1V336.6h1V347.4h1V335.3h1V321.3h1V323.6h1V355.6h1V345.2h1V340h1V339.9h1V343.4h1V355.2h1V373.7h1V370.4h1V369.9h1V367.7h1V370.1h1V368h1V370.2h1V373h1V376.7h1V372.1h1V369.2h1V365.4h1V367.6h1V374.5h1V376.5h1V378.2h1V381.8h1V379.8h1V381.1h1V381.1h1V384.2h1V378.7h1V377.3h1V379.4h1V379.5h1V372.6h1V370.4h1V371h1V371h1V370.4h1V371.2h1V376.1h1V380h1V378.4h1V370.3h1V364h1V365.5h1V362.6h1V353.2h1V346.8h1V347.5h1V361.3h1V359h1V361.9h1V365.2h1V371.4h1V376.6h1V380.9h1V381.2h1V364.3h1V350.2h1V349.7h1V352h1V362h1V368.7h1V361.6h1V356.1h1V356.8h1V362.4h1V369.4h1V381.5h1V382.7h1V379.2h1V360.5h1V360.8h1V355.8h1V358.8h1V362.5h1V359.8h1V353.1h1V363.5h1V361.6h1V343.1h1V347.5h1V367.2h1V360.7h1V361h1V348.6h1V350.2h1V364.4h1V363.2h1V369.8h1V362.9h1V363.1h1V366.8h1V360.9h1V362.1h1V364.2h1V371.2h1V372.7h1V376.6h1V379.4h1V376.9h1V381.5h1V376.6h1V377.3h1V375.5h1V368h1V360.2h1V366.2h1V367.6h1V361.9h1V362.9h1V368.9h1V369.1h1V365.3h1V374.7h1V373.5h1V360.5h1V363.9h1V377.2h1V369.8h1V370.2h1V366.8h1V367.5h1V371.5h1V366h1V365.1h1V361.5h1V366.4h1V373.1h1V371.1h1V366.8h1V357.5h1V356.9h1V357.1h1V360.2h1V368.1h1V374h1V373.3h1V367.6h1V351.3h1V352.8h1V356.4h1V373.5h1V363.1h1V358.9h1V362.2h1V365.9h1V366.8h1V360.9h1V365.2h1V372.7h1V375.4h1V367.5h1V362.3h1V359.9h1V361.8h1V372h1V365.3h1V371.7h1V368.5h1V365.1h1V369h1V355.2h1V356h1V356h1V364.4h1V361h1V363.5h1V365.1h1V366.6h1V369.3h1V377.9h1V376.3h1V369.5h1V367.2h1V363.9h1V361h1V360h1V362.6h1V352.3h1V352.9h1V350.2h1V345.7h1V348.2h1V354.5h1V370.3h1V370.2h1V379.3h1V377h1V370.2h1V355.8h1V342.9h1V341.1h1V355h1V351.2h1V355.4h1V365.7h1V347.3h1V361.7h1V349.7h1V353.2h1V357.9h1V361.6h1V361.9h1V363.4h1V372.5h1V367h1V369.2h1V370.6h1V374.2h1V360.1h1V359.1h1V357.5h1V355.6h1V357.7h1V360h1V361.9h1V364.1h1V364.9h1V364.8h1V345.5h1V342.8h1V342.4h1V348.5h1V346.5h1V341.7h1V346.5h1V348.2h1V354.7h1V350h1V345.4h1V342.5h1V343.4h1V344.5h1V352.1h1V337.6h1V347.6h1V351.4h1V354.1h1V341.9h1V357.8h1V350.7h1V363.9h1V366.4h1V367.8h1V375.9h1V368.6h1V365.5h1V366.4h1V369.1h1V374.9h1V371h1V368.9h1V369.9h1V372.1h1V376.3h1V381.4h1V372.3h1V360h1V358.5h1V354.6h1V352.7h1V356.9h1V352.5h1V346.5h1V333.8h1V332.1h1V356.5h1V340.4h1V337.9h1V352.1h1V349.5h1V349.5h1V333.8h1V333.8h1V344.1h1V350.8h1V355.2h1V355.6h1V344.3h1V344.3h1V351.7h1V356.3h1V361.6h1V333.3h1V333.3h1V352.8h1V350.4h1V346h1V346h1V348.9h1V348.9h1V356.4h1V359h1V360.9h1V357.4h1V357.2h1V356.9h1V364.1h1V353.4h1V353.4h1V342.3h1V353.6h1V338.6h1V346.5h1V351.9h1V355.6h1V350.5h1V350.5h1V357.3h1V357.8h1V338.3h1V338.3h1V346.7h1V352.1h1V355h1V356.5h1V333.9h1V346.6h1V363.4h1V357.1h1V357.9h1V355.2h1V357.7h1V331.4h1V331.4h1V348.5h1V355.6h1V353h1V353.5h1V358.1h1V353h1V340.3h1V349.5h1V359.8h1V348h1V342.9h1V329.1h1V333.9h1V348.5h1V352.3h1V356.3h1V350.6h1V334.6h1V343h1V348.5h1V329.6h1V329.6h1V329.7h1V329.7h1V342.9h1V350.2h1V349.8h1V354.1h1V349.2h1V338.3h1V345.5h1V357.4h1V345.1h1V345.1h1V352.1h1V341.9h1V341.9h1V353h1V349.1h1V349.1h1V348.1h1V358.8h1V351.4h1V351.6h1V351.4h1V340.3h1V340.3h1V349.1h1V343.3h1V343.3h1V336.7h1V344.3h1V349h1V337.4h1V347.8h1V352.5h1V325.8h1V325.8h1V343.9h1V351.3h1V333.9h1V346.4h1V330.2h1V326.5h1V325.3h1V325.3h1V345.6h1V350.4h1V328h1V343.3h1V345.5h1V345.8h1V349.4h1V333.9h1V348.7h1V351.9h1V347.5h1V334.3h1V334.3h1V341.2h1V345.8h1V348.5h1V344.3h1V344.3h1V347.1h1V323.9h1V323.9h1V337.3h1V344.7h1V348.8h1V319.1h1V319.1h1V334.3h1V342.8h1V339.2h1V339.2h1V328.5h1V328.5h1V322.1h1V322.1h1V342.2h1V345.7h1V349.4h1V350.2h1V355.3h1V350.2h1V349.3h1V324.7h1V337.7h1V344.7h1V342.8h1V345.1h1V325.7h1V334.3h1V334.4h1V325.7h1V316.5h1V328.5h1V336.5h1V352.9h1V345.2h1V347.6h1V340.1h1V340.1h1V343.8h1V315.9h1V327.4h1V327.5h1V330.1h1V317h1V329.9h1V337.9h1V343h1V339.9h1V345.4h1V325.4h1V325.4h1V334.2h1V352.9h1V343.8h1V345.4h1V340.7h1V343.8h1V351.2h1V341.3h1V342.5h1V340.4h1V339.1h1V340.6h1V338.7h1V332.5h1V317.9h1V317.9h1V342.3h1V338.7h1V334.2h1V334.2h1V339.8h1V328.1h1V340.2h1V324.8h1V324.8h1V337.5h1V343.3h1V341.6h1V338.9h1V319.8h1V319.8h1V325.6h1V325.6h1V339h1V317.9h1V317.9h1V321.6h1V321.6h1V337.1h1V323.3h1V347.6h1V326.2h1V326.2h1V335.5h1V337.1h1V340.1h1V337h1V339.8h1V324.4h1V324.4h1V334.5h1V351.4h1V337.3h1V357.3h1V337.9h1V340h1V343.5h1V341.3h1V322.2h1V334.3h1V340.8h1V344.2h1V338h1V336.3h1V311.6h1V325.5h1V334h1V339.3h1V338.3h1V343.9h1V339.5h1V341.2h1V338.8h1V335.4h1V338.3h1V319.5h1V319.5h1V337.5h1V334.2h1V334.2h1V309.2h1V309.2h1V327.4h1V342.7h1V316.1h1V331.8h1V321.6h1V332h1V325.9h1V339.8h1V335h1V339.8h1V333.7h1V337.3h1V339.8h1V342.9h1V337.6h1V342.4h1V331.1h1V331.1h1V337.6h1V346.9h1V341.4h1V325.3h1V324.3h1V324.3h1V338.4h1V338.2h1V338.3h1V340.3h1V328.5h1V328.5h1V340.2h1V336.9h1V339.6h1V308.2h1V308.2h1V325.9h1V333.1h1V334.4h1V317.5h1V317.5h1V331.9h1V332.8h1V334.9h1V340.6h1V317.9h1V317.9h1V333.1h1V332.2h1V307.9h1V332.8h1V348.2h1V339.6h1V335.9h1V348.5h1V332.8h1V331h1V331.5h1V336.7h1V314.5h1V321.6h1V325.9h1V332.9h1V337.1h1V332.5h1V333.1h1V330.2h1V322.9h1V310.2h1V324.6h1V331.7h1V331.3h1V337.6h1V320.1h1V330.3h1V321.4h1V337.9h1V330.7h1V330h1V333.8h1V305.6h1V331.3h1V330.3h1V339h1V332.2h1V328h1V331.4h1V332.8h1V332.4h1V337.5h1V327.3h1V320.2h1V328.4h1V303.7h1V303.7h1V327.4h1V305.4h1V305.4h1V304.2h1V304.2h1V319h1V327.8h1V342.7h1V305.8h1V305.8h1V325.9h1V334.2h1V324.9h1V330.2h1V331.7h1V336h1V331.2h1V316.7h1V316.7h1V325.2h1V330.5h1V331.7h1V299.7h1V299.7h1V305h1V327.3h1V325.2h1V343.3h1V331.3h1V330.6h1V310.3h1V310.3h1V324h1V336.5h1V334.3h1V331.8h1V303.9h1V303.9h1V298.4h1V298.4h1V312.1h1V321.1h1V327h1V339h1V333.5h1V325.9h1V324.4h1V330.6h1V328.9h1V334.4h1V326.5h1V330.5h1V327h1V328.3h1V315.2h1V315.2h1V303h1V303h1V314.3h1V321.9h1V327.1h1V329.9h1V327.7h1V338.4h1V331.5h1V326.5h1V330.2h1V326.5h1V344.5h1V327.5h1V331.9h1V306.3h1V306.3h1V316.5h1V322.3h1V322.3h1V329.5h1V335.2h1V326.9h1V300.3h1V319.3h1V328.6h1V309.2h1V326h1V332.7h1V323.9h1V332.2h1V343.2h1V329.8h1V314.4h1V339.5h1V327h1V328.8h1V320.7h1V323.2h1V327.2h1V330.8h1V327.5h1V329.4h1V307.7h1V307.7h1V307h1V307h1V317h1V323.7h1V322.9h1V331h1V325.2h1V326.6h1V322.2h1V323.5h1V326h1V326.3h1V328.7h1V326.7h1V323.8h1V331h1V328.9h1V335.2h1V324.7h1V327.9h1V309.5h1V300.5h1V300.5h1V315.1h1V323.8h1V309h1V321.7h1V325.3h1V327.1h1V323.2h1V324.6h1V332.5h1V310.7h1V310.7h1V320.7h1V332.8h1V317h1V299.6h1V314.7h1V323.6h1V321.5h1V325.7h1V329.5h1V312.9h1V316.6h1V316.6h1V313.5h1V320.9h1V325.8h1V326.8h1V326.1h1V305.2h1V305.2h1V320.2h1V322.2h1V323.6h1V335.2h1V327.7h1V329.3h1V327.4h1V327.2h1V331.8h1V299.9h1V320.9h1V321.2h1V314.7h1V314.7h1V308.5h1V308.5h1V320.1h1V323.8h1V330.3h1V331.8h1V319.3h1V302.4h1V302.4h1V319.3h1V328.7h1V339.7h1V336.3h1V328.7h1V326h1V313h1V333.9h1V300.1h1V300.1h1V311.9h1V319.6h1V324.7h1V326.9h1V326.3h1V326h1V331.1h1V328.3h1V322.2h1V323.4h1V326.1h1V319.6h1V319.6h1V324.3h1V304.8h1V324.4h1V321.4h1V315h1V327.9h1V299.7h1V315h1V319h1V319h1V325.8h1V320.4h1V320.4h1V322.4h1V316.3h1V326h1V325.7h1V310.5h1V319h1V319.1h1V312.7h1V312.7h1V321.2h1V324.6h1V320.8h1V322.2h1V330.3h1V316h1V320.6h1V323.1h1V309.3h1V323h1V326.8h1V313.7h1V313.7h1V321.8h1V326.5h1V329.3h1V324.7h1V331.5h1V330.1h1V321.7h1V325.6h1V328.3h1V320h1V311.7h1V311.7h1V305h1V317.1h1V302.6h1V319.3h1V309.7h1V309.7h1V317.1h1V322.1h1V333.6h1V321.5h1V318.3h1V318.4h1V318.4h1V323.5h1V319.9h1V311.1h1V331.9h1V323.8h1V318.8h1V315.7h1V308h1V303.6h1V313.5h1V314.9h1V324h1V333.3h1V333.1h1V298.2h1V298.2h1V316.9h1V323.2h1V319.1h1V304.9h1V319.6h1V325.9h1V290h1V306.5h1V323.7h1V302.5h1V302.5h1V321.7h1V320.1h1V316.8h1V298.5h1V291h1V291h1V309.2h1V315.1h1V322h1V326.9h1V316.9h1V325.5h1V317.7h1V308.4h1V326.1h1V321h1V323.7h1V320.5h1V312.1h1V312.1h1V320.1h1V302.8h1V303.1h1V292.1h1V312.3h1V315.4h1V315.4h1V319.5h1V300.6h1V300.6h1V313.6h1V323.8h1V286.9h1V320.9h1V324h1V320.4h1V314.3h1V307.5h1V315.1h1V320.2h1V328.9h1V325.9h1V318.1h1V329.9h1V307.8h1V307.8h1V323.1h1V297.9h1V297.9h1V310.3h1V331h1V324.3h1V323.2h1V324.4h1V315.6h1V320.5h1V318.7h1V320.7h1V317.4h1V319.1h1V317.1h1V316.5h1V314.6h1V316h1V314.7h1V314h1V320.2h1V338.9h1V304.3h1V314.7h1V320.9h1V313.2h1V306.2h1V285.1h1V308.6h1V319.7h1V325h1V326.1h1V316.9h1V292.8h1V292.8h1V288.5h1V304h1V308.1h1V308.1h1V332.1h1V314.3h1V318.9h1V317.7h1V294.6h1V294.6h1V317.2h1V288.8h1V302.6h1V311.8h1V318h1V336h1V300.3h1V300.3h1V327.9h1V321.4h1V324.8h1V315.1h1V298.2h1V298.2h1V288.8h1V303.6h1V313.3h1V319.6h1V310.6h1V319.2h1V324.3h1V300.6h1V321.4h1V336.2h1V315.8h1V317.2h1V289.7h1V304.6h1V314.2h1V320.2h1V324.1h1V287.7h1V309.2h1V303.1h1V303.1h1V312.5h1V315.2h1V321h1V324.2h1V302.4h1V302.4h1V315.4h1V319.9h1V321.8h1V326.6h1V319.6h1V316.9h1V301.5h1V301.5h1V310.8h1V297.4h1V297.4h1V313.8h1V300.6h1V310.5h1V296.1h1V296.1h1V307.1h1V295.3h1V315.9h1V307.4h1V317.4h1V320.2h1V289.8h1V289.8h1V304.4h1V313.8h1V326.3h1V313.1h1V306.4h1V292.5h1V306.6h1V315.5h1V321.1h1V306.9h1V306.9h1V315h1V323.9h1V295.1h1V295.1h1V308.5h1V315.1h1V320.2h1V313.5h1V313.5h1V318.1h1V292.2h1V292.2h1V306.1h1V308.8h1V316.6h1V319.5h1V284.4h1V284.4h1V307.2h1V318.6h1V324.3h1V324.6h1V327.5h1V329.3h1V329.5h1V325.3h1V328.6h1V320.5h1V319.8h1V320.3h1V317.7h1V326.1h1V327.9h1V328.6h1V324.7h1V292.6h1V292.6h1V296.9h1V296.9h1V316.4h1V325h1V325.1h1V319.5h1V319.4h1V324.2h1V325.8h1V321.6h1V293.7h1V325.5h1V315.7h1V310.4h1V310.4h1V297h1V297h1V310.7h1V319h1V323.3h1V322.7h1V326.5h1V326.3h1V316.4h1V309.1h1V324.6h1V308.5h1V308.5h1V319.7h1V315.6h1V317.6h1V314.8h1V304.2h1V304.2h1V318.4h1V324.1h1V318.2h1V317.9h1V318.9h1V323.9h1V321.8h1V325.6h1V319.6h1V325.3h1V314.5h1V314.5h1V318.9h1V312.3h1V312.3h1V324.2h1V320.6h1V310.7h1V310.7h1V299h1V299h1V310.1h1V310.1h1V318.5h1V334.2h1V324.9h1V331.5h1V313.6h1V337.7h1V333.6h1V333.6h1V335.8h1V338.6h1V338.7h1V338.7h1V343.1h1V350.1h1V353.5h1V344.1h1V344.1h1V349.5h1V352.1h1V346.3h1V346.3h1V352.7h1V356.3h1V354.6h1V354.6h1V354.9h1V351.9h1V351.9h1V345.2h1V345.2h1V353h1V357.2h1V354h1V354h1V354.9h1V346.5h1V351.5h1V354.9h1V342.2h1V342.2h1V354.3h1V345.4h1V345.4h1V353.4h1V354.9h1V344.5h1V350.8h1V351.1h1V349.2h1V356.9h1V358.1h1V347.8h1V355.7h1V345.6h1V351.7h1V355.7h1V356.1h1V352.6h1V352.6h1V359.6h1V348.5h1V348.5h1V354h1V357.5h1V359.8h1V351.4h1V351.4h1V355.5h1V358.3h1V353.2h1V362.2h1V343.9h1V347.1h1V346h1V346h1V352.8h1V356.8h1V359.8h1V347.8h1V347.8h1V356.5h1V360.6h1V354.8h1V360.5h1V350.7h1V350.7h1V347.6h1V347.6h1V344.5h1V356.6h1V354.5h1V360.9h1V351.3h1V356.2h1V358h1V354.3h1V354.3h1V358.5h1V355.8h1V355.8h1V360h1V357.2h1V361.6h1V360.9h1V352.3h1V352.3h1V362.1h1V356.6h1V359.5h1V359.1h1V359.3h1V356.9h1V357.6h1V360.7h1V361.9h1V349.6h1V349.6h1V347.5h1V356.8h1V357.3h1V363.2h1V353.2h1V357.6h1V358h1V355.6h1V358.1h1V362.9h1V357.5h1V344.9h1V344.9h1V351.2h1V355.4h1V358.1h1V358.8h1V350.3h1V350h1V355.8h1V356.2h1V357.8h1V360.3h1V340.1h1V343.6h1V348.6h1V347.8h1V354h1V355.5h1V356.3h1V355.8h1V356.7h1V357.2h1V359.9h1V343h1V343h1V350.4h1V355.2h1V352.5h1V359.7h1V359.9h1V347h1V347h1V354.4h1V358.6h1V357.2h1V397V432.9h-1V436.9h-1V438.9h-1V445.1h-1V445.1h-1V430.8h-1V446.6h-1V446.6h-1V434.7h-1V437.4h-1V441.5h-1V448h-1V448h-1V441.8h-1V441.8h-1V445.3h-1V445.3h-1V442.5h-1V449.5h-1V436.2h-1V436.4h-1V439.2h-1V435h-1V435.2h-1V437.9h-1V439.6h-1V446.7h-1V452h-1V443.4h-1V451.4h-1V451.4h-1V434.8h-1V437.8h-1V438.1h-1V441.5h-1V446.8h-1V454.8h-1V454.8h-1V440.8h-1V446.9h-1V447.8h-1V457.1h-1V450.9h-1V447.5h-1V442.9h-1V452.6h-1V452.6h-1V435h-1V441.4h-1V446.8h-1V454.8h-1V445.9h-1V449.6h-1V459h-1V424.9h-1V434.5h-1V432.6h-1V438.7h-1V441.8h-1V436.7h-1V435.7h-1V433.3h-1V432.7h-1V437.1h-1V437h-1V438.8h-1V439.1h-1V445.2h-1V445.2h-1V437.1h-1V436.6h-1V438h-1V435.5h-1V440h-1V439.2h-1V446.8h-1V445.3h-1V439.7h-1V435h-1V437.1h-1V433.9h-1V442.5h-1V447.8h-1V432.3h-1V442h-1V442h-1V454h-1V446.3h-1V456.6h-1V437.8h-1V437.1h-1V437.6h-1V439.9h-1V444.5h-1V453.7h-1V453.7h-1V438.8h-1V438.8h-1V439.7h-1V444.5h-1V446.5h-1V446.5h-1V442.1h-1V448.9h-1V435.2h-1V437.5h-1V441.3h-1V447.8h-1V458.7h-1V436.5h-1V441.5h-1V452.2h-1V442.1h-1V447.2h-1V454.9h-1V438.7h-1V437.9h-1V443.7h-1V455.7h-1V455.7h-1V437.6h-1V440.1h-1V443.8h-1V449.5h-1V435.9h-1V437.8h-1V429.5h-1V439.9h-1V441.2h-1V447.6h-1V436.7h-1V438.6h-1V436h-1V436.8h-1V438.8h-1V441.5h-1V445.6h-1V445.6h-1V436.7h-1V438.3h-1V440.7h-1V444.6h-1V444.6h-1V442.8h-1V455.7h-1V455.7h-1V439h-1V445.8h-1V444.5h-1V444.6h-1V444.9h-1V447.3h-1V452.1h-1V452.1h-1V450.6h-1V457h-1V455.5h-1V457.6h-1V459.5h-1V465.7h-1V475.5h-1V460.3h-1V464.4h-1V467.4h-1V479.4h-1V488.6h-1V488.6h-1V464.7h-1V451.1h-1V488.8h-1V471.7h-1V466.4h-1V488.8h-1V507.4h-1V507.4h-1V484.1h-1V473.9h-1V494.1h-1V494.1h-1V476.8h-1V483.1h-1V473h-1V476.9h-1V475.8h-1V475.4h-1V485.8h-1V506.1h-1V506.1h-1V488h-1V481.9h-1V473.7h-1V478.7h-1V508h-1V508h-1V474.8h-1V482.1h-1V482.1h-1V491.8h-1V506.7h-1V472.6h-1V464.1h-1V479h-1V486h-1V502.5h-1V502.5h-1V476.5h-1V476.7h-1V484.4h-1V496.7h-1V481.2h-1V492.6h-1V492.6h-1V471.1h-1V471.8h-1V476.8h-1V485h-1V485.4h-1V459.5h-1V471.6h-1V480.8h-1V474.6h-1V480.6h-1V483h-1V502h-1V504.1h-1V504.1h-1V472.9h-1V470.4h-1V486.7h-1V500.2h-1V475.4h-1V455.3h-1V471.1h-1V467.9h-1V468.3h-1V468.8h-1V476.3h-1V476h-1V482.7h-1V493.1h-1V493.1h-1V478.3h-1V490.7h-1V490.7h-1V498.5h-1V498.5h-1V471.9h-1V473.8h-1V473.9h-1V471h-1V496.4h-1V486.1h-1V485.3h-1V488.9h-1V480.6h-1V493h-1V476.1h-1V482.2h-1V482.2h-1V482h-1V471.5h-1V495.5h-1V494.7h-1V475.7h-1V487.5h-1V487.5h-1V470.1h-1V473.8h-1V483.3h-1V483.3h-1V477.2h-1V486.6h-1V486.6h-1V472.5h-1V458.6h-1V477h-1V478.8h-1V484.3h-1V496.1h-1V496.1h-1V492.5h-1V492.5h-1V486.8h-1V499h-1V495.7h-1V506.4h-1V506.4h-1V474.2h-1V482.6h-1V482.6h-1V482.6h-1V484.9h-1V505.4h-1V464.2h-1V478.2h-1V493.5h-1V475.5h-1V471.8h-1V484.4h-1V484.4h-1V483.6h-1V474.1h-1V500.4h-1V487h-1V484.9h-1V506.6h-1V506.6h-1V483.3h-1V493h-1V507.4h-1V507.4h-1V459.6h-1V483h-1V497.7h-1V497.7h-1V477.4h-1V486.4h-1V486.4h-1V470.7h-1V479.1h-1V482h-1V493.4h-1V496.4h-1V512.2h-1V473.2h-1V463.9h-1V471.6h-1V475.2h-1V477.7h-1V486.9h-1V467.6h-1V471.1h-1V471.5h-1V454.1h-1V484.2h-1V484.2h-1V450.4h-1V477.9h-1V479.5h-1V491h-1V475.4h-1V481.4h-1V490.5h-1V504.3h-1V499.4h-1V499.4h-1V471.3h-1V478.3h-1V469.5h-1V472.8h-1V469.4h-1V474h-1V475.9h-1V482h-1V491.3h-1V505.4h-1V505.4h-1V474.4h-1V471h-1V480.6h-1V490.7h-1V481.3h-1V500h-1V500h-1V478.8h-1V475.7h-1V509.8h-1V509.8h-1V493.6h-1V510h-1V478h-1V482h-1V498.6h-1V498.6h-1V488.5h-1V506.3h-1V506.3h-1V481.2h-1V493.2h-1V503.1h-1V503.1h-1V473.5h-1V475.6h-1V472.1h-1V476.6h-1V495.4h-1V470.3h-1V471.8h-1V479.3h-1V494.6h-1V478.6h-1V478.3h-1V467.9h-1V466.9h-1V479.4h-1V481.1h-1V503.8h-1V503.8h-1V467.4h-1V459h-1V476h-1V485.4h-1V501.6h-1V460.3h-1V478.1h-1V477.8h-1V468h-1V476.6h-1V499.5h-1V499.5h-1V481.1h-1V481.1h-1V473.2h-1V473.1h-1V480.2h-1V492.3h-1V492.3h-1V470.2h-1V479.4h-1V498.5h-1V498.5h-1V489.7h-1V506.2h-1V469.8h-1V474.4h-1V470.1h-1V474.2h-1V480.7h-1V487.8h-1V501.1h-1V501.1h-1V465.7h-1V474.9h-1V470.7h-1V477.2h-1V482.4h-1V492.8h-1V492.8h-1V474.3h-1V467.5h-1V453.5h-1V472.9h-1V469.9h-1V492.4h-1V492.4h-1V475.5h-1V489.7h-1V467.5h-1V467.3h-1V463.8h-1V474.8h-1V469.4h-1V473.8h-1V466.4h-1V462.4h-1V469.9h-1V469.9h-1V453.5h-1V456.1h-1V461.1h-1V470.1h-1V485.8h-1V485.8h-1V480.5h-1V480.5h-1V468.4h-1V483.2h-1V483.2h-1V467.8h-1V481.4h-1V457.7h-1V469h-1V464.2h-1V462.9h-1V448.8h-1V466.8h-1V467.1h-1V469h-1V469.1h-1V484.1h-1V484.1h-1V475.2h-1V490.1h-1V475.5h-1V494.8h-1V474h-1V485.7h-1V499.9h-1V473.9h-1V484.9h-1V484.9h-1V489.8h-1V472.5h-1V468h-1V473.3h-1V473.4h-1V481.8h-1V489.5h-1V495.4h-1V457.8h-1V488h-1V488h-1V463.5h-1V465.1h-1V474.2h-1V484.1h-1V478.7h-1V478.7h-1V471.7h-1V460.7h-1V463.5h-1V450.2h-1V472.3h-1V467.7h-1V486.2h-1V485.8h-1V474.2h-1V470.1h-1V472.3h-1V465.2h-1V465.4h-1V468.8h-1V474h-1V482.1h-1V482.1h-1V472.9h-1V472h-1V462.6h-1V466h-1V463.4h-1V474.3h-1V474.7h-1V489.3h-1V489.3h-1V466.3h-1V469.7h-1V478.1h-1V471.9h-1V464.8h-1V470h-1V492.1h-1V464.5h-1V470h-1V477.5h-1V477.5h-1V467h-1V484.9h-1V488.2h-1V488.2h-1V462.2h-1V466.6h-1V467.8h-1V466.5h-1V469.8h-1V479.7h-1V467.5h-1V464.3h-1V468.2h-1V468h-1V491.5h-1V491.5h-1V470.2h-1V471.7h-1V466.5h-1V454h-1V468.5h-1V476.5h-1V490.8h-1V469.7h-1V469.7h-1V463.1h-1V471.5h-1V469.8h-1V467.5h-1V467.8h-1V460.6h-1V462.8h-1V480.5h-1V472h-1V474.7h-1V482.7h-1V482.7h-1V491.5h-1V491.5h-1V479h-1V479h-1V463.1h-1V467.4h-1V472.9h-1V483.2h-1V464.6h-1V471.9h-1V464.9h-1V465.7h-1V466h-1V478.6h-1V478.6h-1V464.2h-1V466.1h-1V476.3h-1V479.2h-1V479.2h-1V473.3h-1V494.7h-1V466.7h-1V463.6h-1V472.3h-1V465.4h-1V469.3h-1V469.3h-1V470h-1V476.7h-1V487.1h-1V487.1h-1V470.8h-1V470.7h-1V480.4h-1V489.1h-1V496.8h-1V469.5h-1V476.3h-1V486.7h-1V463.1h-1V470.4h-1V483.1h-1V483.1h-1V470.6h-1V470.6h-1V458h-1V477.9h-1V460.1h-1V466.3h-1V454.3h-1V468.4h-1V471.7h-1V484.2h-1V483.6h-1V483.6h-1V466.7h-1V471.8h-1V467.3h-1V493.9h-1V493.9h-1V472.2h-1V472.2h-1V473.7h-1V473.7h-1V468.5h-1V468.6h-1V463h-1V483.9h-1V469.7h-1V460.8h-1V466.6h-1V466.2h-1V474.2h-1V474.2h-1V479.2h-1V468.4h-1V462h-1V466.6h-1V486.5h-1V470.8h-1V467.3h-1V487.1h-1V462.1h-1V467.2h-1V473.5h-1V493.8h-1V460.3h-1V463.6h-1V467.1h-1V462.7h-1V461.5h-1V460.2h-1V458.5h-1V466.7h-1V448h-1V451.9h-1V469.1h-1V469.1h-1V458.9h-1V463.5h-1V472.5h-1V489.9h-1V459h-1V462.4h-1V461.1h-1V465.6h-1V467.3h-1V474.1h-1V474.1h-1V463h-1V459.9h-1V467.5h-1V465.7h-1V459.6h-1V452.1h-1V458.8h-1V460.9h-1V463.8h-1V486.7h-1V464.5h-1V467.5h-1V491.1h-1V491.1h-1V467.9h-1V486.8h-1V486.8h-1V472.4h-1V472.4h-1V464h-1V479.2h-1V479.2h-1V458.9h-1V463.2h-1V463.6h-1V481.8h-1V465.6h-1V463.5h-1V464.7h-1V468h-1V468h-1V463.7h-1V463.4h-1V445.2h-1V457.4h-1V461.6h-1V469h-1V464.9h-1V460.6h-1V460h-1V455.6h-1V452.2h-1V466.3h-1V489.7h-1V457.4h-1V457.6h-1V462.4h-1V459.9h-1V459.3h-1V454.9h-1V457.6h-1V463.7h-1V480.1h-1V480.1h-1V453.4h-1V458.2h-1V461.6h-1V487.9h-1V458.1h-1V457.1h-1V458.5h-1V455.5h-1V458.6h-1V463.5h-1V471h-1V482.7h-1V462.3h-1V468.5h-1V468.5h-1V466.4h-1V476.4h-1V459.4h-1V478.1h-1V478.1h-1V481.6h-1V481.6h-1V449.3h-1V462.7h-1V467.3h-1V465.9h-1V474.9h-1V474.9h-1V463.7h-1V471.1h-1V482.1h-1V482.1h-1V456.9h-1V445.8h-1V456.1h-1V459.2h-1V458.9h-1V466.3h-1V478.8h-1V478.8h-1V463.9h-1V476.9h-1V476.9h-1V450.8h-1V451.2h-1V458.9h-1V461.8h-1V481.9h-1V481.9h-1V471.1h-1V458h-1V463.9h-1V475.6h-1V475.6h-1V463.7h-1V481.8h-1V457h-1V458.8h-1V454h-1V458.4h-1V467.1h-1V482.4h-1V482.4h-1V461.4h-1V476.1h-1V476.1h-1V456h-1V464.5h-1V479.4h-1V452.5h-1V450.7h-1V454.2h-1V460.2h-1V471.1h-1V471.1h-1V457h-1V457.7h-1V457h-1V457h-1V458.4h-1V478.6h-1V478.6h-1V467.6h-1V479.6h-1V452.4h-1V448.4h-1V448.8h-1V457h-1V453.5h-1V458h-1V464.9h-1V465h-1V476.3h-1V458.4h-1V468.3h-1V457.7h-1V478h-1V456.1h-1V438.5h-1V450.6h-1V447.6h-1V441.3h-1V449.9h-1V447.5h-1V455.3h-1V450.7h-1V452.6h-1V457.5h-1V452.6h-1V452.3h-1V455.4h-1V466.1h-1V466.1h-1V478.9h-1V478.9h-1V452.7h-1V447.8h-1V451.5h-1V458.9h-1V473.2h-1V473.2h-1V441.2h-1V446.7h-1V454.1h-1V453.2h-1V447.1h-1V447.6h-1V447.3h-1V437.8h-1V453.3h-1V465.2h-1V448.6h-1V450.8h-1V451.7h-1V450.6h-1V453.5h-1V451.8h-1V452h-1V456.4h-1V452.6h-1V449.4h-1V450.6h-1V448.1h-1V453.3h-1V453.3h-1V452.8h-1V447.7h-1V450.2h-1V466.5h-1V466.5h-1V461.5h-1V461.5h-1V445.7h-1V448.8h-1V454.2h-1V464h-1V464h-1V449.5h-1V448.7h-1V450.3h-1V455.4h-1V451.2h-1V472h-1V476.6h-1V458.2h-1V468.4h-1V452.3h-1V448h-1V453.3h-1V462.9h-1V462.9h-1V460.9h-1V475h-1V475h-1V449.7h-1V454.6h-1V462.5h-1V442.2h-1V446.3h-1V451.8h-1V463.3h-1V465.3h-1V465.3h-1V445h-1V447.8h-1V441.3h-1V448.5h-1V450.9h-1V451.1h-1V451.1h-1V444.7h-1V449.6h-1V444.4h-1V440.9h-1V438.8h-1V473.9h-1V473.9h-1V470.8h-1V470.8h-1V447.9h-1V445.9h-1V449.3h-1V454.5h-1V462.5h-1V444.8h-1V445.1h-1V444.3h-1V439h-1V462.7h-1V446.1h-1V455.4h-1V452.5h-1V459.3h-1V469.4h-1V459.3h-1V435.1h-1V444.1h-1V436h-1V446.2h-1V441.1h-1V442.8h-1V447.6h-1V452.1h-1V461.3h-1V447.1h-1V464.1h-1V464.1h-1V452.8h-1V460.4h-1V448.7h-1V456.1h-1V456.1h-1V459h-1V459h-1V450.3h-1V462.1h-1V462.1h-1V445.5h-1V445.3h-1V443.6h-1V436.6h-1V457.1h-1V457.1h-1V444.1h-1V443.7h-1V429.5h-1V443.5h-1V444.6h-1V451.9h-1V459.7h-1V465h-1V438.1h-1V434.3h-1V443.3h-1V441h-1V440.9h-1V440.8h-1V444.7h-1V451h-1V451h-1V451.2h-1V463.3h-1V463.3h-1V445h-1V456.6h-1V442.2h-1V446.3h-1V452.5h-1V457.2h-1V457.2h-1V441h-1V429.7h-1V439.3h-1V440.7h-1V439.6h-1V437.9h-1V444.8h-1V461.5h-1V461.5h-1V450.7h-1V450.7h-1V446.8h-1V440.2h-1V455.9h-1V455.9h-1V456.9h-1V462.6h-1V439.2h-1V436.3h-1V441h-1V442.2h-1V442.2h-1V440.1h-1V445.1h-1V447.3h-1V453.1h-1V462h-1V462h-1V434.6h-1V439.4h-1V442.2h-1V448.3h-1V460.8h-1V439.1h-1V435h-1V433.7h-1V435.2h-1V437.5h-1V441h-1V441.6h-1V453.8h-1V453.8h-1V429.1h-1V444.9h-1V444.9h-1V440.1h-1V445.8h-1V455h-1V446.9h-1V446.9h-1V435.6h-1V445.8h-1V445.8h-1V441.6h-1V457h-1V457h-1V456.4h-1V456.4h-1V438.7h-1V444.5h-1V444.5h-1V438.2h-1V434h-1V432.3h-1V462.5h-1V445.6h-1V438.6h-1V434.7h-1V450.1h-1V448.2h-1V447.1h-1V436.7h-1V438.8h-1V440h-1V439.3h-1V438.1h-1V419.4h-1V417.7h-1V420.4h-1V420.2h-1V418.6h-1V421.1h-1V417.6h-1V420.6h-1V417.9h-1V426.8h-1V432.3h-1V426.5h-1V427.2h-1V431.5h-1V432.9h-1V436.9h-1V439h-1V440.9h-1V437.1h-1V444.2h-1V445.7h-1V448.3h-1V450.5h-1V434.7h-1V459.8h-1V458.9h-1V456.9h-1V443.7h-1V432.4h-1V438.9h-1V439.1h-1V431.5h-1V452.3h-1V451.1h-1V438.5h-1V447.2h-1V438.6h-1V440.9h-1V430.2h-1V417.8h-1V429.4h-1V433.5h-1V434.7h-1V437h-1V438.8h-1V435.6h-1V425.4h-1V431h-1V428.9h-1V430h-1V427.8h-1V431.3h-1V425.6h-1V437.8h-1V439.2h-1V437.2h-1V431.8h-1V438.4h-1V446.4h-1V444.2h-1V435.8h-1V428.4h-1V432.4h-1V454.4h-1V440.3h-1V448.6h-1V441.6h-1V427.4h-1V418.7h-1V422.7h-1V417.1h-1V426.1h-1V435.2h-1V436.1h-1V436.2h-1V428.3h-1V430h-1V427.1h-1V427.8h-1V428.3h-1V427.7h-1V427.1h-1V424.3h-1V423.2h-1V424h-1V421.1h-1V426.4h-1V427.7h-1V427.7h-1V428.3h-1V428.1h-1V428.6h-1V429.6h-1V428.6h-1V429.5h-1V435.2h-1V433h-1V433.7h-1V425.1h-1V420.8h-1V427.5h-1V429.4h-1V438.9h-1V441.2h-1V440h-1V430.8h-1V422.5h-1V419.4h-1V420.7h-1V428.4h-1V432.3h-1V446.1h-1V449h-1V447.8h-1V444.7h-1V443.4h-1V433.9h-1V447.5h-1V446.3h-1V441.2h-1V429.6h-1V418.1h-1V434.4h-1V444.5h-1V434.9h-1V445.4h-1V443.4h-1V439.1h-1V426h-1V417.3h-1V421.9h-1V418.9h-1V425.5h-1V421.5h-1V430.4h-1V436.1h-1V439.1h-1V435.5h-1V415.9h-1V432.9h-1V438.3h-1V446.9h-1V445h-1V444.7h-1V437.8h-1V430.4h-1V427h-1V423.3h-1V429.1h-1V435.7h-1V435.9h-1V436.7h-1V424.3h-1V418.3h-1V414.8h-1V415.7h-1V416.6h-1V413.3h-1V414.8h-1V412.4h-1V417.1h-1V422.2h-1V441.2h-1V439.5h-1V443.1h-1V418.6h-1V428.3h-1V429.6h-1V430.6h-1V432.8h-1V430.3h-1V447.2h-1V438.2h-1V445.4h-1V433.9h-1V423.8h-1V442.7h-1V445.1h-1V449.1h-1V446.9h-1V439.9h-1V451h-1V451.7h-1V434.2h-1V440h-1V440.5h-1V430.8h-1V408.1h-1V410.2h-1V414.3h-1V420.8h-1V428.5h-1V439.6h-1V441.1h-1V440.4h-1V437.4h-1V438.4h-1V437.1h-1V435.8h-1V436.5h-1V438.1h-1V413h-1V408.1h-1V411.9h-1V414.3h-1V423.7h-1V434.8h-1V434.2h-1V433h-1V432h-1V433.6h-1V433.8h-1V424.7h-1V422.3h-1V422.9h-1V420.8h-1V412.8h-1V412.4h-1V415.9h-1V418h-1V418.9h-1V421h-1V417.5h-1V421.4h-1V415.2h-1V415.8h-1V415.5h-1V409.9h-1V414.5h-1V413.9h-1V412.4h-1V413.1h-1V413.9h-1V409.9h-1V415h-1V416h-1V415.9h-1V423.8h-1V422.4h-1V423.5h-1V423h-1V422.2h-1V422.8h-1V421.6h-1V426.7h-1V427.7h-1V427.3h-1V426.3h-1V423.6h-1V424.5h-1V444.2h-1V446.6h-1V455.6h-1V456.4h-1V456.6h-1V428.3h-1V456.5h-1V456.3h-1V448.6h-1V451.7h-1V459.6h-1V461.4h-1V461.2h-1V460.1h-1V457h-1V458h-1V435.8h-1V448.3h-1V443.1h-1V407.6h-1V411h-1V411.2h-1V416.8h-1V420.2h-1V413.7h-1V420.7h-1V423.4h-1V425h-1V419.2h-1V430.5h-1V450.2h-1V453.2h-1V459.9h-1V446.6h-1V436.5h-1V435.5h-1V437.8h-1V455.4h-1V456.3h-1V448.6h-1V455.2h-1V456.2h-1V447.8h-1V450.2h-1V450.8h-1V450.5h-1V445.1h-1V437.1h-1V432.7h-1V442.7h-1V439.3h-1V433h-1V433h-1V437.7h-1V439.6h-1V439.5h-1V442.3h-1V447.3h-1V452.2h-1V452.5h-1V450.7h-1V457.4h-1V461.9h-1V460.5h-1V427.7h-1V430.7h-1V443.3h-1V442h-1V437.2h-1V450.5h-1V453.1h-1V442.9h-1V441.7h-1V448.6h-1V449.1h-1V450.5h-1V450.1h-1V450.5h-1V453.3h-1V460.5h-1V457.8h-1V463.7h-1V468.3h-1V466h-1V437.2h-1V423.6h-1V431.8h-1V432.8h-1V406.6h-1V408.1h-1V410.2h-1V409.1h-1V419.4h-1V418.6h-1V409.5h-1V409.3h-1V411.8h-1V414.2h-1V415.3h-1V420h-1V422.1h-1V409.9h-1V408h-1V411.3h-1V414.4h-1V416.8h-1V427.2h-1V433.6h-1V432.8h-1V428.3h-1V407.3h-1V404.7h-1V409.2h-1V413.9h-1V414.6h-1V415.7h-1V412.5h-1V409.5h-1V406.3h-1V408.7h-1V409.3h-1V410.8h-1V421.4h-1V418.7h-1V413.5h-1V412.6h-1V414.6h-1V415.1h-1V415.7h-1V421.5h-1V419.1h-1V413.4h-1V415.5h-1V415.5h-1V412.2h-1V411.2h-1V412.2h-1V410.9h-1V416h-1V414.9h-1V416.6h-1V414.9h-1V408.2h-1V408.8h-1V408.8h-1V408.9h-1V409.3h-1V408.8h-1V407.7h-1V408.8h-1V410.2h-1V412.9h-1V410.6h-1V415.7h-1V415.5h-1V422.8h-1V417.6h-1V414.6h-1V411.2h-1V419.3h-1V422.9h-1V409.4h-1V411.2h-1V410.2h-1V412.9h-1V413.9h-1V416h-1V417h-1V412.1h-1V404.5h-1V405.9h-1V405.8h-1V407.4h-1V407.7h-1V410.7h-1V408.4h-1V406.9h-1V406.6h-1V406.9h-1V407.5h-1V409.3h-1V411.7h-1V412.5h-1V407.6h-1V409h-1V413.6h-1V413.9h-1V412.5h-1V413.9h-1V426h-1V418.8h-1V411.8h-1V412.4h-1V412.8h-1V409.6h-1V415h-1V417.4h-1V418.6h-1V409.5h-1V408.7h-1V408.3h-1V407.3h-1V406.2h-1V405.5h-1V404.2h-1V403.2h-1V402.3h-1V401.4h-1V400.5h-1V399.5h-1V398.8h-1V397.9h-1Z"/>
    <path id="mv" d="M24 118V117.1h1V117.4h1V117.4h1V117.4h1V117.4h1V117.4h1V117.4h1V117.4h1V117.4h1V117.4h1V117.1h1V117.4h1V117.4h1V117.1h1V117.4h1V117.4h1V117.4h1V117.1h1V117.4h1V117.4h1V117.4h1V117.4h1V117.1h1V117.4h1V117.4h1V117.1h1V117.4h1V117.4h1V117.1h1V117.4h1V117.1h1V117.4h1V117.4h1V117.4h1V117.4h1V117.4h1V117.1h1V117.1h1V117.4h1V117.4h1V117.4h1V117.4h1V117.4h1V117.4h1V117.4h1V117.4h1V117.4h1V117.4h1V117.1h1V117.4h1V117.4h1V117.4h1V117.4h1V117.4h1V117.4h1V117.4h1V117.4h1V117.4h1V117.4h1V117.4h1V117.1h1V117.1h1V117.4h1V117.4h1V117.4h1V117.4h1V117.4h1V117.4h1V117.4h1V117.4h1V117.4h1V117.4h1V117.1h1V117.1h1V117.4h1V117.4h1V117.4h1V117.4h1V117.4h1V117.1h1V117.1h1V117.4h1V117.4h1V117.4h1V117.4h1V117.4h1V117.4h1V117.4h1V117.4h1V117.4h1V117.4h1V117.4h1V117.4h1V117.4h1V117.4h1V117.4h1V117.4h1V117.1h1V117.1h1V117.4h1V117.4h1V117.4h1V117.4h1V117.1h1V117.4h1V117.4h1V117.4h1V117.1h1V117.1h1V117.4h1V117.4h1V117.4h1V117.4h1V117.4h1V117.4h1V117.4h1V117.4h1V117.4h1V117.1h1V117.4h1V117.4h1V117.4h1V117.4h1V117.4h1V117.4h1V117.4h1V117.4h1V117.4h1V117.4h1V117.4h1V117.4h1V117.1h1V117.4h1V117.4h1V117.1h1V117.4h1V117.4h1V117.4h1V117.4h1V117.4h1V117.4h1V117.4h1V117.4h1V117.1h1V117.1h1V117.1h1V117.1h1V117.4h1V117.1h1V117.4h1V117.4h1V117.1h1V117.4h1V117.4h1V117.4h1V117.4h1V116h1V116.5h1V117.1h1V117.1h1V117.4h1V117.4h1V117.4h1V117.1h1V117.4h1V117.4h1V117.4h1V115.8h1V116h1V117.4h1V117.1h1V117.4h1V115h1V115.5h1V117.1h1V116.5h1V115.8h1V117.4h1V117.1h1V115.6h1V116.5h1V117.4h1V117.4h1V117.4h1V117.4h1V117.1h1V117.4h1V117.4h1V117.4h1V117.4h1V117.4h1V117.4h1V117.4h1V117.1h1V117.4h1V117.4h1V116h1V116.8h1V117.4h1V117.4h1V115h1V117.4h1V117.4h1V117.4h1V117.4h1V117.1h1V117.4h1V117.4h1V115.4h1V115.6h1V116.5h1V117.4h1V117.4h1V117.4h1V117.1h1V117.1h1V117.1h1V117.4h1V117.4h1V117.4h1V117.4h1V115.9h1V117.4h1V117.4h1V117.4h1V117.4h1V117.1h1V116.1h1V117.1h1V117.4h1V117.4h1V117.4h1V117.4h1V117.1h1V117.4h1V117.4h1V117.4h1V117.4h1V117.1h1V117.4h1V117.4h1V117.4h1V117.4h1V117.4h1V117.4h1V117.4h1V117.4h1V117.4h1V117.4h1V117.4h1V117.1h1V117.4h1V117.4h1V117.4h1V117.4h1V117.4h1V117.4h1V116.3h1V117.4h1V117.4h1V117.1h1V117.4h1V117.1h1V117.4h1V117.4h1V117.4h1V117.4h1V117.1h1V117.4h1V117.4h1V117.1h1V117.4h1V117.4h1V117.4h1V117.1h1V117.4h1V117.4h1V117.1h1V117.4h1V117.1h1V117.4h1V117.1h1V117.4h1V117.1h1V117.4h1V117.4h1V117.4h1V117.4h1V117.4h1V117.1h1V117.1h1V117.4h1V117.1h1V117.1h1V117.4h1V115.6h1V117.4h1V117.4h1V116h1V115.9h1V117.4h1V117.1h1V116h1V117.1h1V117.4h1V117.4h1V117.4h1V117.4h1V117.1h1V117.4h1V117.4h1V117.4h1V116.5h1V117.4h1V117.4h1V117.1h1V117.4h1V117.4h1V117.4h1V117.4h1V115.9h1V117.1h1V117.4h1V117.4h1V117.4h1V117.1h1V117.1h1V117.4h1V117.4h1V117.4h1V117.4h1V117.4h1V117.4h1V117.1h1V117.4h1V117.1h1V117.4h1V117.4h1V117.1h1V117.1h1V117.4h1V117.4h1V117.1h1V117.1h1V117.1h1V116.1h1V117.4h1V117.4h1V117.1h1V117.1h1V117.4h1V117.4h1V117.4h1V117.4h1V117.4h1V117.4h1V117.1h1V117.4h1V117.1h1V116.2h1V117.4h1V117.4h1V117.1h1V117.4h1V117.4h1V117.1h1V117.4h1V117.4h1V117.4h1V117.4h1V117.1h1V117.4h1V117.4h1V117.4h1V117.4h1V117.4h1V117.4h1V117.4h1V117.4h1V117.4h1V116.2h1V117.4h1V117.4h1V117.4h1V117.4h1V117.1h1V117.4h1V117.4h1V117.4h1V117.1h1V117.4h1V117.4h1V117.4h1V117.4h1V117.4h1V117.4h1V117.1h1V117.4h1V117.1h1V117.4h1V117.4h1V117.4h1V117.1h1V116.2h1V117.4h1V115.8h1V117.1h1V117.1h1V117.4h1V117.4h1V117.4h1V117.4h1V117.1h1V117.1h1V117.4h1V117.4h1V117.4h1V117.4h1V117.4h1V117.1h1V117.4h1V117.4h1V117.4h1V117.1h1V117.4h1V117.4h1V115.6h1V117.4h1V117.4h1V117.4h1V117.4h1V117.4h1V117.4h1V117.4h1V115.8h1V117.4h1V117.4h1V117.4h1V117.1h1V117.1h1V117.4h1V117.4h1V117.4h1V117.1h1V117.4h1V117.4h1V117.4h1V117.4h1V117.4h1V117.4h1V117.4h1V117.4h1V117.4h1V117.4h1V117.4h1V117.1h1V117.4h1V117.4h1V117.4h1V117.1h1V117.4h1V117.4h1V117.1h1V117.4h1V117.4h1V117.1h1V117.4h1V117.1h1V117.4h1V117.1h1V117.1h1V117.1h1V117.4h1V117.4h1V117.1h1V117.4h1V117.4h1V117.4h1V117.4h1V117.1h1V117.1h1V117.1h1V117.4h1V117.4h1V117.1h1V117.4h1V117.4h1V115.8h1V117.4h1V117.4h1V117.4h1V117.4h1V117.4h1V117.4h1V117.4h1V117.4h1V117.4h1V117.4h1V117.4h1V117.4h1V117.4h1V117.1h1V117.4h1V115.9h1V117.4h1V117.1h1V117.4h1V117.4h1V117.1h1V117.4h1V117.1h1V117.4h1V117.4h1V117.4h1V117.1h1V116.5h1V117.1h1V117.4h1V117.4h1V117.1h1V117.1h1V117.4h1V117.1h1V117.4h1V117.4h1V117.1h1V117.4h1V117.4h1V117.1h1V117.1h1V117.4h1V117.1h1V117.1h1V117.4h1V117.4h1V117.4h1V117.4h1V116.3h1V117.4h1V117.4h1V117.4h1V117.4h1V116.1h1V117.4h1V117.4h1V117.4h1V117.1h1V117.4h1V117.1h1V117.4h1V117.4h1V117.4h1V117.4h1V117.1h1V117.1h1V117.4h1V117.4h1V117.4h1V117.4h1V116.2h1V116.1h1V117.4h1V117.4h1V117.1h1V117.1h1V117.1h1V117.4h1V117.4h1V117.1h1V117.4h1V117.4h1V117.4h1V117.4h1V117.4h1V117.4h1V117.4h1V117.4h1V117.1h1V117.4h1V117.1h1V117.1h1V117.1h1V117.4h1V117.4h1V117.1h1V116.3h1V117.4h1V117.1h1V117.4h1V117.1h1V117.4h1V117.4h1V117.4h1V117.4h1V117.4h1V117.1h1V117.4h1V117.4h1V117.4h1V117.4h1V117.1h1V117.4h1V117.4h1V117.1h1V117.4h1V117.4h1V117.4h1V117.4h1V117.4h1V117.1h1V117.4h1V117.1h1V117.4h1V117.4h1V117.1h1V117.4h1V117.4h1V117.1h1V117.1h1V117.4h1V117.4h1V117.4h1V117.4h1V117.4h1V117.4h1V117.4h1V117.4h1V117.4h1V117.4h1V117.4h1V117.4h1V117.4h1V117.4h1V117.4h1V117.1h1V117.1h1V117.4h1V117.1h1V116.5h1V117.4h1V117.4h1V115.5h1V117.1h1V117.4h1V117.1h1V117.4h1V117.4h1V117.4h1V117.4h1V117.4h1V117.1h1V117.1h1V117.4h1V117.4h1V117.4h1V117.1h1V117.4h1V117.1h1V117.4h1V117.4h1V117.1h1V117.1h1V117.4h1V117.4h1V117.4h1V117.4h1V117.1h1V117.4h1V116.1h1V117.1h1V117.1h1V117.1h1V115.2h1V117.1h1V117.4h1V117.4h1V117.4h1V117.4h1V117.4h1V117.1h1V117.4h1V114.9h1V117.1h1V117.1h1V117.1h1V117.4h1V117.4h1V117.4h1V117.4h1V117.4h1V117.1h1V117.1h1V117.1h1V117.4h1V117.4h1V117.4h1V114.9h1V117.4h1V117.4h1V117.4h1V117.4h1V117.1h1V117.4h1V117.4h1V117.4h1V117.4h1V115.3h1V117.4h1V117.4h1V117.1h1V117.4h1V117.1h1V117.4h1V117.4h1V116.1h1V117.1h1V117.4h1V117.4h1V114.9h1V117.4h1V117.4h1V117.4h1V117.4h1V117.4h1V117.4h1V117.4h1V117.4h1V117.1h1V117.1h1V117.4h1V117.1h1V115h1V117.1h1V117.4h1V117.1h1V117.1h1V117.4h1V117.4h1V117.1h1V117.4h1V116.6h1V117.1h1V117.1h1V117.1h1V117.1h1V117.4h1V117.4h1V117.4h1V117.4h1V117.4h1V117.1h1V117.4h1V117.4h1V117.4h1V117.4h1V117.4h1V117.4h1V117.1h1V117.4h1V117.4h1V117.4h1V117.4h1V115.3h1V117.1h1V117.4h1V117.4h1V117.4h1V117.1h1V117.1h1V117.4h1V117.4h1V117.4h1V117.1h1V117.1h1V117.4h1V117.1h1V117.4h1V117.4h1V117.4h1V117.4h1V117.4h1V117.4h1V117.1h1V117.4h1V117.4h1V117.4h1V117.4h1V117.1h1V117.4h1V117.4h1V116.1h1V117.4h1V117.1h1V117.4h1V117.4h1V117.4h1V117.4h1V117.4h1V117.4h1V117.4h1V117.4h1V116h1V117.4h1V117.1h1V117.4h1V115.4h1V117.4h1V117.1h1V117.1h1V117.1h1V117.4h1V117.1h1V117.4h1V117.1h1V117.4h1V117.4h1V117.4h1V114.9h1V117.4h1V117.4h1V117.4h1V117.4h1V117.1h1V117.4h1V117.4h1V117.4h1V116.4h1V117.1h1V117.4h1V117.4h1V117.4h1V117.4h1V117.4h1V117.1h1V117.4h1V117.1h1V117.4h1V117.1h1V117.1h1V117.1h1V117.1h1V117.4h1V117.4h1V117.4h1V117.4h1V117.4h1V115.3h1V117.4h1V117.4h1V117.4h1V117.4h1V117.1h1V117.4h1V117.4h1V117.1h1V117.1h1V117.4h1V117.4h1V117.4h1V117.4h1V117.4h1V117.4h1V117.4h1V117.4h1V115.2h1V117.4h1V117.1h1V117.4h1V117.1h1V117.4h1V117.4h1V117.4h1V117.4h1V117.4h1V117.4h1V117.1h1V117.4h1V117.4h1V117.1h1V117.4h1V117.4h1V117.4h1V117.1h1V117.4h1V117.4h1V116.2h1V117.4h1V117.4h1V117.4h1V117.4h1V117.4h1V117.4h1V117.1h1V117.1h1V117.1h1V117.4h1V117.1h1V117.4h1V117.4h1V117.1h1V117.4h1V117.4h1V117.4h1V117.4h1V117.4h1V117.4h1V117.4h1V117.1h1V117.4h1V117.4h1V117.4h1V117.4h1V117.4h1V117.4h1V117.1h1V117.1h1V117.1h1V117.1h1V117.4h1V115.6h1V117.4h1V117.4h1V117.4h1V117.4h1V117.1h1V115.6h1V117.1h1V117.4h1V117.4h1V117.4h1V117.4h1V117.1h1V117.4h1V117.4h1V117.1h1V117.4h1V117.4h1V117.4h1V115.7h1V117.1h1V117.4h1V117.4h1V117.4h1V117.1h1V117.4h1V117.4h1V117.4h1V117.4h1V117.1h1V117.4h1V115.3h1V117.1h1V117.4h1V117.1h1V117.4h1V117.1h1V116.2h1V117.4h1V117.4h1V117.4h1V117.4h1V117.4h1V117.1h1V117.4h1V117.4h1V117.4h1V117.1h1V117.4h1V117.4h1V117.1h1V117.4h1V117.4h1V117.4h1V117.1h1V117.4h1V117.1h1V117.1h1V117.4h1V117.4h1V117.4h1V117.4h1V117.1h1V117.4h1V117.4h1V117.1h1V117.4h1V117.1h1V117.1h1V115.5h1V117.4h1V117.1h1V117.4h1V117.4h1V117.1h1V117.4h1V117.4h1V117.1h1V117.4h1V117.1h1V117.1h1V117.4h1V117.4h1V117.1h1V117.4h1V117.1h1V117.4h1V117.1h1V117.4h1V117.1h1V117.4h1V117.4h1V117.1h1V117.4h1V117.4h1V117.4h1V117.4h1V117.4h1V117.1h1V117.1h1V115.5h1V117.4h1V117.4h1V117.1h1V117.4h1V117.4h1V117.4h1V117.4h1V117.4h1V117.4h1V117.4h1V117.1h1V117.4h1V117.4h1V115.8h1V117.4h1V117.4h1V117.4h1V117.1h1V117.4h1V117.1h1V116.2h1V117.4h1V117.4h1V116.1h1V117.4h1V117.1h1V117.1h1V117.4h1V117.4h1V117.4h1V117.4h1V117.4h1V117.4h1V117.4h1V117.4h1V117.4h1V117.4h1V117.4h1V117.4h1V115h1V117.4h1V117.4h1V117.4h1V117.4h1V117.4h1V117.4h1V117.4h1V116h1V117.4h1V117.4h1V117.4h1V117.4h1V117.4h1V117.4h1V117.4h1V117.4h1V115.5h1V116.1h1V117.1h1V117.4h1V117.1h1V117.4h1V116.3h1V117.4h1V117.4h1V115.5h1V117.4h1V117.4h1V116.7h1V115h1V117.4h1V117.4h1V117.1h1V117.4h1V117.4h1V117.1h1V117.4h1V117.4h1V117.4h1V117.4h1V117.4h1V117.1h1V117.4h1V117.1h1V117.4h1V117.4h1V117.4h1V117.4h1V116.4h1V117.4h1V117.4h1V117.4h1V117.1h1V117.4h1V117.4h1V117.1h1V117.4h1V117.4h1V117.4h1V117.1h1V117.4h1V117.4h1V117.4h1V115.5h1V117.4h1V117.1h1V117.4h1V117.4h1V115.1h1V117.1h1V117.4h1V117.4h1V117.4h1V117.4h1V117.4h1V117.4h1V117.1h1V117.4h1V117.4h1V117.4h1V117.4h1V117.4h1V117.4h1V117.1h1V117.4h1V117.1h1V117.4h1V117.1h1V117.4h1V117.1h1V117.4h1V117.4h1V117.4h1V117.1h1V117.4h1V117.4h1V117.1h1V117.4h1V117.4h1V117.4h1V117.1h1V117.4h1V117.1h1V117.4h1V116h1V117.4h1V117.4h1V117.1h1V117.4h1V116.1h1V117.4h1V117.4h1V117.4h1V117.4h1V117.4h1V117.1h1V117.4h1V117.1h1V117.4h1V117.4h1V117.4h1V117.4h1V117.4h1V117.4h1V117.1h1V117.4h1V117.4h1V117.4h1V117.4h1V117.4h1V117.4h1V117.4h1V117.1h1V117.1h1V117.1h1V117.4h1V117.4h1V116.7h1V117.4h1V117.1h1V115.8h1V115.2h1V117.4h1V117.4h1V117.4h1V117.1h1V117.1h1V117.4h1V117.4h1V117.4h1V117.4h1V117.4h1V117.4h1V117.4h1V117.4h1V117.4h1V117.1h1V115.1h1V117.1h1V117.4h1V117.4h1V117.4h1V117.4h1V117.1h1V117.1h1V117.4h1V117.4h1V117.1h1V117.4h1V117.4h1V117.4h1V117.4h1V117.4h1V117.4h1V115.6h1V117.4h1V117.4h1V117.4h1V117.4h1V117.4h1V117.4h1V117.1h1V117.4h1V117.4h1V117.4h1V117.4h1V117.1h1V117.4h1V117.4h1V117.4h1V115.1h1V117.1h1V117.4h1V117.4h1V117.1h1V117.1h1V117.1h1V117.4h1V117.4h1V117.1h1V117.1h1V117.4h1V117.1h1V117.4h1V117.4h1V116.6h1V117.4h1V117.4h1V117.4h1V117.4h1V117.1h1V117.4h1V117.1h1V117.1h1V115.7h1V117.4h1V117.1h1V117.1h1V116.6h1V117.1h1V117.4h1V115.3h1V117.4h1V117.4h1V117.1h1V117.4h1V117.4h1V117.4h1V117.4h1V117.4h1V117.1h1V117.4h1V117.4h1V117.4h1V117.4h1V117.4h1V116.2h1V117.4h1V117.1h1V115.3h1V117.4h1V117.4h1V117.4h1V117.4h1V117.1h1V117.4h1V117.4h1V117.4h1V117.1h1V117.4h1V117.4h1V117.4h1V117.1h1V117.4h1V117.4h1V117.1h1V117.4h1V117.4h1V117.4h1V115.8h1V117.4h1V115.3h1V117.4h1V117.1h1V117.4h1V117.1h1V115.7h1V117.1h1V117.4h1V117.4h1V117.1h1V117.4h1V115.2h1V117.1h1V117.4h1V117.4h1V117.4h1V117.1h1V117.4h1V117.4h1V117.4h1V117.4h1V117.4h1V117.4h1V117.4h1V117.1h1V117.4h1V117.1h1V117.4h1V117.4h1V117.4h1V117.4h1V117.4h1V117.1h1V117.1h1V116.1h1V117.1h1V117.1h1V117.4h1V117.1h1V117.4h1V117.4h1V117.4h1V117.1h1V117.1h1V117.4h1V117.4h1V117.4h1V116.5h1V117.4h1V115h1V117.1h1V117.4h1V117.4h1V117.4h1V117.4h1V117.4h1V117.4h1V117.4h1V117.4h1V117.1h1V117.1h1V117.4h1V117.4h1V117.4h1V117.1h1V117.1h1V117.1h1V117.4h1V116.4h1V115.8h1V117.4h1V116.2h1V117.1h1V117.4h1V117.4h1V117.1h1V117.4h1V117.4h1V117.1h1V117.1h1V117.4h1V117.4h1V117.1h1V117.1h1V117.4h1V117.4h1V117.4h1V116h1V117.1h1V117.1h1V117.1h1V117.4h1V117.1h1V117.4h1V117.4h1V117.1h1V117.4h1V117.4h1V117.4h1V117.1h1V117.4h1V117.4h1V117.4h1V117.4h1V116.6h1V117.4h1V115.4h1V117.1h1V117.4h1V117.4h1V117.4h1V117.4h1V117.1h1V117.4h1V117.4h1V117.4h1V117.1h1V117.4h1V117.4h1V117.4h1V117.4h1V117.4h1V117.1h1V117.4h1V117.4h1V117.4h1V117.4h1V117.4h1V117.4h1V117.4h1V117.1h1V117.1h1V117.4h1V117.1h1V117.1h1V117.4h1V117.4h1V117.1h1V117.4h1V117.4h1V117.4h1V117.1h1V117.1h1V117.4h1V117.4h1V117.1h1V117.1h1V117.4h1V117.1h1V117.1h1V117.1h1V117.4h1V117.4h1V117.4h1V117.1h1V117.4h1V117.4h1V117.4h1V117.4h1V117.4h1V117.1h1V117.4h1V117.4h1V117.4h1V117.4h1V116.4h1V115.7h1V117.1h1V117.4h1V117.4h1V117.4h1V117.1h1V117.4h1V117.4h1V117.4h1V117.1h1V117.4h1V117.4h1V117.4h1V117.4h1V117.1h1V117.4h1V117.4h1V117.4h1V117.4h1V117.4h1V117.4h1V117.4h1V117.4h1V117.4h1V117.4h1V117.4h1V117.1h1V117.4h1V117.4h1V117.1h1V117.4h1V117.1h1V117.4h1V117.4h1V117.4h1V117.4h1V117.4h1V117.1h1V117.4h1V117.4h1V117.1h1V117.4h1V117.4h1V116.4h1V117.4h1V117.1h1V117.4h1V117.4h1V117.4h1V117.4h1V117.4h1V117.4h1V117.4h1V117.4h1V117.1h1V117.4h1V117.4h1V117.1h1V117.4h1V117.1h1V117.4h1V117.4h1V117.4h1V117.4h1V117.1h1V118V118.9h-1V118.6h-1V118.6h-1V118.6h-1V118.6h-1V118.9h-1V118.6h-1V118.9h-1V118.6h-1V118.6h-1V118.9h-1V118.6h-1V118.6h-1V118.6h-1V118.6h-1V118.6h-1V118.6h-1V118.6h-1V118.6h-1V118.9h-1V118.6h-1V119.6h-1V118.6h-1V118.6h-1V118.9h-1V118.6h-1V118.6h-1V118.9h-1V118.6h-1V118.6h-1V118.6h-1V118.6h-1V118.6h-1V118.9h-1V118.6h-1V118.9h-1V118.6h-1V118.6h-1V118.9h-1V118.6h-1V118.6h-1V118.6h-1V118.6h-1V118.6h-1V118.6h-1V118.6h-1V118.6h-1V118.6h-1V118.6h-1V118.6h-1V118.9h-1V118.6h-1V118.6h-1V118.6h-1V118.6h-1V118.9h-1V118.6h-1V118.6h-1V118.6h-1V118.9h-1V118.6h-1V118.6h-1V118.6h-1V118.9h-1V120.3h-1V119.6h-1V118.6h-1V118.6h-1V118.6h-1V118.6h-1V118.9h-1V118.6h-1V118.6h-1V118.6h-1V118.6h-1V118.6h-1V118.9h-1V118.6h-1V118.6h-1V118.6h-1V118.9h-1V118.9h-1V118.9h-1V118.6h-1V118.9h-1V118.9h-1V118.6h-1V118.6h-1V118.9h-1V118.9h-1V118.6h-1V118.6h-1V118.6h-1V118.9h-1V118.6h-1V118.6h-1V118.9h-1V118.9h-1V118.6h-1V118.9h-1V118.9h-1V118.6h-1V118.6h-1V118.6h-1V118.6h-1V118.6h-1V118.6h-1V118.6h-1V118.9h-1V118.6h-1V118.6h-1V118.6h-1V118.6h-1V118.6h-1V118.9h-1V118.6h-1V118.6h-1V118.6h-1V118.9h-1V118.6h-1V118.6h-1V118.6h-1V118.6h-1V118.9h-1V120.6h-1V118.6h-1V119.4h-1V118.6h-1V118.6h-1V118.6h-1V118.6h-1V118.9h-1V118.6h-1V118.6h-1V118.6h-1V118.9h-1V118.6h-1V118.6h-1V118.9h-1V118.6h-1V118.9h-1V118.9h-1V118.9h-1V120h-1V118.6h-1V118.6h-1V118.6h-1V118.9h-1V118.9h-1V118.6h-1V118.6h-1V118.9h-1V118.9h-1V118.6h-1V118.6h-1V118.9h-1V118.6h-1V118.6h-1V118.9h-1V119.8h-1V118.6h-1V120.2h-1V119.6h-1V118.6h-1V118.9h-1V118.9h-1V118.9h-1V118.6h-1V118.6h-1V118.6h-1V118.9h-1V118.9h-1V118.6h-1V118.6h-1V118.6h-1V118.6h-1V118.6h-1V118.6h-1V118.6h-1V118.6h-1V118.9h-1V121h-1V118.6h-1V119.5h-1V118.6h-1V118.6h-1V118.6h-1V118.9h-1V118.9h-1V118.6h-1V118.6h-1V118.6h-1V118.9h-1V118.6h-1V118.9h-1V118.9h-1V119.9h-1V118.9h-1V118.9h-1V118.6h-1V118.6h-1V118.6h-1V118.6h-1V118.6h-1V118.9h-1V118.6h-1V118.9h-1V118.6h-1V118.6h-1V118.6h-1V118.6h-1V118.6h-1V118.6h-1V118.6h-1V118.9h-1V118.6h-1V118.6h-1V118.6h-1V118.9h-1V120.8h-1V118.6h-1V118.9h-1V118.6h-1V118.6h-1V118.9h-1V120.3h-1V118.9h-1V118.6h-1V118.9h-1V118.6h-1V120.7h-1V118.6h-1V120.2h-1V118.6h-1V118.6h-1V118.6h-1V118.9h-1V118.6h-1V118.6h-1V118.9h-1V118.6h-1V118.6h-1V118.6h-1V118.9h-1V118.6h-1V118.6h-1V118.6h-1V118.9h-1V118.6h-1V118.6h-1V118.6h-1V118.6h-1V120.7h-1V118.9h-1V118.6h-1V119.8h-1V118.6h-1V118.6h-1V118.6h-1V118.6h-1V118.6h-1V118.9h-1V118.6h-1V118.6h-1V118.6h-1V118.6h-1V118.6h-1V118.9h-1V118.6h-1V118.6h-1V120.7h-1V118.6h-1V118.9h-1V119.4h-1V118.9h-1V118.9h-1V118.6h-1V120.3h-1V118.9h-1V118.9h-1V118.6h-1V118.9h-1V118.6h-1V118.6h-1V118.6h-1V118.6h-1V119.4h-1V118.6h-1V118.6h-1V118.9h-1V118.6h-1V118.9h-1V118.9h-1V118.6h-1V118.6h-1V118.9h-1V118.9h-1V118.9h-1V118.6h-1V118.6h-1V118.9h-1V120.9h-1V118.6h-1V118.6h-1V118.6h-1V118.9h-1V118.6h-1V118.6h-1V118.6h-1V118.6h-1V118.9h-1V118.6h-1V118.6h-1V118.6h-1V118.6h-1V118.6h-1V118.6h-1V120.4h-1V118.6h-1V118.6h-1V118.6h-1V118.6h-1V118.6h-1V118.6h-1V118.9h-1V118.6h-1V118.6h-1V118.9h-1V118.9h-1V118.6h-1V118.6h-1V118.6h-1V118.6h-1V118.9h-1V120.9h-1V118.9h-1V118.6h-1V118.6h-1V118.6h-1V118.6h-1V118.6h-1V118.6h-1V118.6h-1V118.6h-1V118.6h-1V118.9h-1V118.9h-1V118.6h-1V118.6h-1V118.6h-1V120.8h-1V120.2h-1V118.9h-1V118.6h-1V119.3h-1V118.6h-1V118.6h-1V118.9h-1V118.9h-1V118.9h-1V118.6h-1V118.6h-1V118.6h-1V118.6h-1V118.6h-1V118.6h-1V118.6h-1V118.9h-1V118.6h-1V118.6h-1V118.6h-1V118.6h-1V118.6h-1V118.6h-1V118.9h-1V118.6h-1V118.9h-1V118.6h-1V118.6h-1V118.6h-1V118.6h-1V118.6h-1V119.9h-1V118.6h-1V118.9h-1V118.6h-1V118.6h-1V120h-1V118.6h-1V118.9h-1V118.6h-1V118.9h-1V118.6h-1V118.6h-1V118.6h-1V118.9h-1V118.6h-1V118.6h-1V118.9h-1V118.6h-1V118.6h-1V118.6h-1V118.9h-1V118.6h-1V118.9h-1V118.6h-1V118.9h-1V118.6h-1V118.9h-1V118.6h-1V118.6h-1V118.6h-1V118.6h-1V118.6h-1V118.6h-1V118.9h-1V118.6h-1V118.6h-1V118.6h-1V118.6h-1V118.6h-1V118.6h-1V118.9h-1V120.9h-1V118.6h-1V118.6h-1V118.9h-1V118.6h-1V120.5h-1V118.6h-1V118.6h-1V118.6h-1V118.9h-1V118.6h-1V118.6h-1V118.6h-1V118.9h-1V118.6h-1V118.6h-1V118.9h-1V118.6h-1V118.6h-1V118.6h-1V119.6h-1V118.6h-1V118.6h-1V118.6h-1V118.6h-1V118.9h-1V118.6h-1V118.9h-1V118.6h-1V118.6h-1V118.6h-1V118.6h-1V118.6h-1V118.9h-1V118.6h-1V118.6h-1V118.9h-1V118.6h-1V118.6h-1V121h-1V119.3h-1V118.6h-1V118.6h-1V120.5h-1V118.6h-1V118.6h-1V119.7h-1V118.6h-1V118.9h-1V118.6h-1V118.9h-1V119.9h-1V120.5h-1V118.6h-1V118.6h-1V118.6h-1V118.6h-1V118.6h-1V118.6h-1V118.6h-1V118.6h-1V120h-1V118.6h-1V118.6h-1V118.6h-1V118.6h-1V118.6h-1V118.6h-1V118.6h-1V121h-1V118.6h-1V118.6h-1V118.6h-1V118.6h-1V118.6h-1V118.6h-1V118.6h-1V118.6h-1V118.6h-1V118.6h-1V118.6h-1V118.6h-1V118.9h-1V118.9h-1V118.6h-1V119.9h-1V118.6h-1V118.6h-1V119.8h-1V118.9h-1V118.6h-1V118.9h-1V118.6h-1V118.6h-1V118.6h-1V120.2h-1V118.6h-1V118.6h-1V118.9h-1V118.6h-1V118.6h-1V118.6h-1V118.6h-1V118.6h-1V118.6h-1V118.6h-1V118.9h-1V118.6h-1V118.6h-1V120.5h-1V118.9h-1V118.9h-1V118.6h-1V118.6h-1V118.6h-1V118.6h-1V118.6h-1V118.9h-1V118.6h-1V118.6h-1V118.9h-1V118.6h-1V118.9h-1V118.6h-1V118.9h-1V118.6h-1V118.9h-1V118.6h-1V118.6h-1V118.9h-1V118.9h-1V118.6h-1V118.9h-1V118.6h-1V118.6h-1V118.9h-1V118.6h-1V118.6h-1V118.9h-1V118.6h-1V120.5h-1V118.9h-1V118.9h-1V118.6h-1V118.9h-1V118.6h-1V118.6h-1V118.9h-1V118.6h-1V118.6h-1V118.6h-1V118.6h-1V118.9h-1V118.9h-1V118.6h-1V118.9h-1V118.6h-1V118.6h-1V118.6h-1V118.9h-1V118.6h-1V118.6h-1V118.9h-1V118.6h-1V118.6h-1V118.6h-1V118.9h-1V118.6h-1V118.6h-1V118.6h-1V118.6h-1V118.6h-1V119.8h-1V118.9h-1V118.6h-1V118.9h-1V118.6h-1V118.9h-1V120.7h-1V118.6h-1V118.9h-1V118.6h-1V118.6h-1V118.6h-1V118.6h-1V118.9h-1V118.6h-1V118.6h-1V118.6h-1V118.9h-1V120.3h-1V118.6h-1V118.6h-1V118.6h-1V118.9h-1V118.6h-1V118.6h-1V118.9h-1V118.6h-1V118.6h-1V118.6h-1V118.6h-1V118.9h-1V120.4h-1V118.9h-1V118.6h-1V118.6h-1V118.6h-1V118.6h-1V120.4h-1V118.6h-1V118.9h-1V118.9h-1V118.9h-1V118.9h-1V118.6h-1V118.6h-1V118.6h-1V118.6h-1V118.6h-1V118.6h-1V118.9h-1V118.6h-1V118.6h-1V118.6h-1V118.6h-1V118.6h-1V118.6h-1V118.6h-1V118.9h-1V118.6h-1V118.6h-1V118.9h-1V118.6h-1V118.9h-1V118.9h-1V118.9h-1V118.6h-1V118.6h-1V118.6h-1V118.6h-1V118.6h-1V118.6h-1V119.8h-1V118.6h-1V118.6h-1V118.9h-1V118.6h-1V118.6h-1V118.6h-1V118.9h-1V118.6h-1V118.6h-1V118.9h-1V118.6h-1V118.6h-1V118.6h-1V118.6h-1V118.6h-1V118.6h-1V118.9h-1V118.6h-1V118.9h-1V118.6h-1V120.8h-1V118.6h-1V118.6h-1V118.6h-1V118.6h-1V118.6h-1V118.6h-1V118.6h-1V118.6h-1V118.9h-1V118.9h-1V118.6h-1V118.6h-1V118.9h-1V118.6h-1V118.6h-1V118.6h-1V118.6h-1V120.7h-1V118.6h-1V118.6h-1V118.6h-1V118.6h-1V118.6h-1V118.9h-1V118.9h-1V118.9h-1V118.9h-1V118.6h-1V118.9h-1V118.6h-1V118.9h-1V118.6h-1V118.6h-1V118.6h-1V118.6h-1V118.6h-1V118.9h-1V119.6h-1V118.6h-1V118.6h-1V118.6h-1V118.9h-1V118.6h-1V118.6h-1V118.6h-1V118.6h-1V121.1h-1V118.6h-1V118.6h-1V118.6h-1V118.9h-1V118.6h-1V118.9h-1V118.6h-1V118.9h-1V118.9h-1V118.9h-1V118.6h-1V120.6h-1V118.6h-1V118.9h-1V118.6h-1V120h-1V118.6h-1V118.6h-1V118.6h-1V118.6h-1V118.6h-1V118.6h-1V118.6h-1V118.6h-1V118.9h-1V118.6h-1V119.9h-1V118.6h-1V118.6h-1V118.9h-1V118.6h-1V118.6h-1V118.6h-1V118.6h-1V118.9h-1V118.6h-1V118.6h-1V118.6h-1V118.6h-1V118.6h-1V118.6h-1V118.9h-1V118.6h-1V118.9h-1V118.9h-1V118.6h-1V118.6h-1V118.6h-1V118.9h-1V118.9h-1V118.6h-1V118.6h-1V118.6h-1V118.9h-1V120.7h-1V118.6h-1V118.6h-1V118.6h-1V118.6h-1V118.9h-1V118.6h-1V118.6h-1V118.6h-1V118.6h-1V118.6h-1V118.6h-1V118.9h-1V118.6h-1V118.6h-1V118.6h-1V118.6h-1V118.6h-1V118.9h-1V118.9h-1V118.9h-1V118.9h-1V119.4h-1V118.6h-1V118.9h-1V118.6h-1V118.6h-1V118.9h-1V118.9h-1V118.6h-1V118.9h-1V121h-1V118.9h-1V118.6h-1V118.9h-1V118.9h-1V118.6h-1V118.6h-1V118.6h-1V118.6h-1V118.6h-1V118.6h-1V118.6h-1V118.6h-1V121.1h-1V118.6h-1V118.6h-1V118.9h-1V119.9h-1V118.6h-1V118.6h-1V118.9h-1V118.6h-1V118.9h-1V118.6h-1V118.6h-1V120.7h-1V118.6h-1V118.6h-1V118.6h-1V118.6h-1V118.9h-1V118.6h-1V118.6h-1V118.6h-1V118.6h-1V121.1h-1V118.6h-1V118.6h-1V118.6h-1V118.9h-1V118.9h-1V118.9h-1V118.6h-1V118.6h-1V118.6h-1V118.6h-1V118.6h-1V118.9h-1V118.9h-1V118.9h-1V121.1h-1V118.6h-1V118.9h-1V118.6h-1V118.6h-1V118.6h-1V118.6h-1V118.6h-1V118.9h-1V120.8h-1V118.9h-1V118.9h-1V118.9h-1V119.9h-1V118.6h-1V118.9h-1V118.6h-1V118.6h-1V118.6h-1V118.6h-1V118.9h-1V118.9h-1V118.6h-1V118.6h-1V118.9h-1V118.6h-1V118.9h-1V118.6h-1V118.6h-1V118.6h-1V118.9h-1V118.9h-1V118.6h-1V118.6h-1V118.6h-1V118.6h-1V118.6h-1V118.9h-1V118.6h-1V118.9h-1V120.5h-1V118.6h-1V118.6h-1V119.5h-1V118.9h-1V118.6h-1V118.9h-1V118.9h-1V118.6h-1V118.6h-1V118.6h-1V118.6h-1V118.6h-1V118.6h-1V118.6h-1V118.6h-1V118.6h-1V118.6h-1V118.6h-1V118.6h-1V118.6h-1V118.6h-1V118.6h-1V118.9h-1V118.9h-1V118.6h-1V118.6h-1V118.9h-1V118.6h-1V118.6h-1V118.9h-1V118.6h-1V118.9h-1V118.6h-1V118.6h-1V118.6h-1V118.6h-1V118.6h-1V118.9h-1V118.6h-1V118.6h-1V118.9h-1V118.6h-1V118.6h-1V118.6h-1V118.6h-1V118.9h-1V118.6h-1V118.6h-1V118.6h-1V118.6h-1V118.6h-1V118.9h-1V118.6h-1V118.9h-1V118.6h-1V119.7h-1V118.9h-1V118.6h-1V118.6h-1V118.9h-1V118.9h-1V118.9h-1V118.6h-1V118.9h-1V118.6h-1V118.6h-1V118.6h-1V118.6h-1V118.6h-1V118.6h-1V118.6h-1V118.6h-1V118.9h-1V118.6h-1V118.6h-1V118.9h-1V118.9h-1V118.9h-1V118.6h-1V118.6h-1V119.9h-1V119.8h-1V118.6h-1V118.6h-1V118.6h-1V118.6h-1V118.9h-1V118.9h-1V118.6h-1V118.6h-1V118.6h-1V118.6h-1V118.9h-1V118.6h-1V118.9h-1V118.6h-1V118.6h-1V118.6h-1V119.9h-1V118.6h-1V118.6h-1V118.6h-1V118.6h-1V119.7h-1V118.6h-1V118.6h-1V118.6h-1V118.6h-1V118.9h-1V118.9h-1V118.6h-1V118.9h-1V118.9h-1V118.6h-1V118.6h-1V118.9h-1V118.6h-1V118.6h-1V118.9h-1V118.6h-1V118.9h-1V118.9h-1V118.6h-1V118.6h-1V118.9h-1V119.5h-1V118.9h-1V118.6h-1V118.6h-1V118.6h-1V118.9h-1V118.6h-1V118.9h-1V118.6h-1V118.6h-1V118.9h-1V118.6h-1V120.1h-1V118.6h-1V118.9h-1V118.6h-1V118.6h-1V118.6h-1V118.6h-1V118.6h-1V118.6h-1V118.6h-1V118.6h-1V118.6h-1V118.6h-1V118.6h-1V118.6h-1V118.6h-1V120.2h-1V118.6h-1V118.6h-1V118.9h-1V118.6h-1V118.6h-1V118.9h-1V118.9h-1V118.9h-1V118.6h-1V118.6h-1V118.6h-1V118.6h-1V118.9h-1V118.6h-1V118.6h-1V118.9h-1V118.9h-1V118.9h-1V118.6h-1V118.9h-1V118.6h-1V118.9h-1V118.6h-1V118.6h-1V118.9h-1V118.6h-1V118.6h-1V118.9h-1V118.6h-1V118.6h-1V118.6h-1V118.9h-1V118.6h-1V118.6h-1V118.6h-1V118.6h-1V118.6h-1V118.6h-1V118.6h-1V118.6h-1V118.6h-1V118.6h-1V118.6h-1V118.9h-1V118.6h-1V118.6h-1V118.6h-1V118.9h-1V118.9h-1V118.6h-1V118.6h-1V118.6h-1V120.2h-1V118.6h-1V118.6h-1V118.6h-1V118.6h-1V118.6h-1V118.6h-1V118.6h-1V120.4h-1V118.6h-1V118.6h-1V118.9h-1V118.6h-1V118.6h-1V118.6h-1V118.9h-1V118.6h-1V118.6h-1V118.6h-1V118.6h-1V118.6h-1V118.9h-1V118.9h-1V118.6h-1V118.6h-1V118.6h-1V118.6h-1V118.9h-1V118.9h-1V120.2h-1V118.6h-1V119.8h-1V118.9h-1V118.6h-1V118.6h-1V118.6h-1V118.9h-1V118.6h-1V118.9h-1V118.6h-1V118.6h-1V118.6h-1V118.6h-1V118.6h-1V118.6h-1V118.9h-1V118.6h-1V118.6h-1V118.6h-1V118.9h-1V118.6h-1V118.6h-1V118.6h-1V118.6h-1V119.8h-1V118.6h-1V118.6h-1V118.6h-1V118.6h-1V118.6h-1V118.6h-1V118.6h-1V118.6h-1V118.6h-1V118.9h-1V118.6h-1V118.6h-1V118.6h-1V118.6h-1V118.9h-1V118.6h-1V118.6h-1V118.9h-1V118.6h-1V118.6h-1V119.8h-1V118.9h-1V118.6h-1V118.9h-1V118.6h-1V118.6h-1V118.6h-1V118.6h-1V118.6h-1V118.6h-1V118.9h-1V118.9h-1V118.6h-1V118.6h-1V119.9h-1V118.9h-1V118.9h-1V118.9h-1V118.6h-1V118.6h-1V118.9h-1V118.9h-1V118.6h-1V118.6h-1V118.9h-1V118.6h-1V118.9h-1V118.6h-1V118.6h-1V118.6h-1V118.6h-1V118.6h-1V118.6h-1V118.9h-1V118.9h-1V118.6h-1V118.6h-1V118.6h-1V118.9h-1V120.1h-1V118.6h-1V118.6h-1V118.6h-1V118.6h-1V118.9h-1V118.6h-1V118.6h-1V119.5h-1V118.6h-1V118.6h-1V118.6h-1V118.9h-1V118.6h-1V118.6h-1V118.6h-1V118.6h-1V118.9h-1V120h-1V118.9h-1V118.6h-1V120.1h-1V120h-1V118.6h-1V118.6h-1V120.4h-1V118.6h-1V118.9h-1V118.9h-1V118.6h-1V118.9h-1V118.9h-1V118.6h-1V118.6h-1V118.6h-1V118.6h-1V118.6h-1V118.9h-1V118.6h-1V118.9h-1V118.6h-1V118.9h-1V118.6h-1V118.9h-1V118.6h-1V118.6h-1V118.9h-1V118.6h-1V118.6h-1V118.6h-1V118.9h-1V118.6h-1V118.6h-1V118.9h-1V118.6h-1V118.6h-1V118.6h-1V118.6h-1V118.9h-1V118.6h-1V118.9h-1V118.6h-1V118.6h-1V119.7h-1V118.6h-1V118.6h-1V118.6h-1V118.6h-1V118.6h-1V118.6h-1V118.9h-1V118.6h-1V118.6h-1V118.6h-1V118.6h-1V118.6h-1V118.6h-1V118.6h-1V118.6h-1V118.6h-1V118.6h-1V118.6h-1V118.9h-1V118.6h-1V118.6h-1V118.6h-1V118.6h-1V118.9h-1V118.6h-1V118.6h-1V118.6h-1V118.6h-1V118.9h-1V119.9h-1V118.9h-1V118.6h-1V118.6h-1V118.6h-1V118.6h-1V120.1h-1V118.6h-1V118.6h-1V118.6h-1V118.6h-1V118.9h-1V118.9h-1V118.9h-1V118.6h-1V118.6h-1V118.6h-1V119.5h-1V120.4h-1V120.6h-1V118.6h-1V118.6h-1V118.9h-1V118.6h-1V118.6h-1V118.6h-1V118.6h-1V121h-1V118.6h-1V118.6h-1V119.2h-1V120h-1V118.6h-1V118.6h-1V118.9h-1V118.6h-1V118.6h-1V118.6h-1V118.6h-1V118.6h-1V118.6h-1V118.6h-1V118.9h-1V118.6h-1V118.6h-1V118.6h-1V118.6h-1V119.5h-1V120.4h-1V118.9h-1V118.6h-1V120.2h-1V119.5h-1V118.9h-1V120.5h-1V121h-1V118.6h-1V118.9h-1V118.6h-1V120h-1V120.2h-1V118.6h-1V118.6h-1V118.6h-1V118.9h-1V118.6h-1V118.6h-1V118.6h-1V118.9h-1V118.9h-1V119.5h-1V120h-1V118.6h-1V118.6h-1V118.6h-1V118.6h-1V118.9h-1V118.6h-1V118.6h-1V118.9h-1V118.6h-1V118.9h-1V118.9h-1V118.9h-1V118.9h-1V118.6h-1V118.6h-1V118.6h-1V118.6h-1V118.6h-1V118.6h-1V118.6h-1V118.6h-1V118.9h-1V118.6h-1V118.6h-1V118.9h-1V118.6h-1V118.6h-1V118.6h-1V118.6h-1V118.6h-1V118.6h-1V118.6h-1V118.6h-1V118.6h-1V118.6h-1V118.6h-1V118.6h-1V118.9h-1V118.6h-1V118.6h-1V118.6h-1V118.6h-1V118.6h-1V118.6h-1V118.6h-1V118.6h-1V118.6h-1V118.9h-1V118.9h-1V118.6h-1V118.6h-1V118.6h-1V118.9h-1V118.6h-1V118.6h-1V118.6h-1V118.6h-1V118.9h-1V118.9h-1V118.6h-1V118.6h-1V118.6h-1V118.6h-1V118.6h-1V118.6h-1V118.6h-1V118.6h-1V118.6h-1V118.6h-1V118.6h-1V118.6h-1V118.6h-1V118.6h-1V118.6h-1V118.6h-1V118.9h-1V118.9h-1V118.6h-1V118.6h-1V118.6h-1V118.6h-1V118.6h-1V118.9h-1V118.9h-1V118.6h-1V118.6h-1V118.6h-1V118.6h-1V118.6h-1V118.6h-1V118.6h-1V118.6h-1V118.6h-1V118.6h-1V118.9h-1V118.9h-1V118.6h-1V118.6h-1V118.6h-1V118.6h-1V118.6h-1V118.6h-1V118.6h-1V118.6h-1V118.6h-1V118.6h-1V118.6h-1V118.9h-1V118.6h-1V118.6h-1V118.6h-1V118.6h-1V118.6h-1V118.6h-1V118.6h-1V118.6h-1V118.6h-1V118.6h-1V118.9h-1V118.9h-1V118.6h-1V118.6h-1V118.6h-1V118.6h-1V118.6h-1V118.9h-1V118.6h-1V118.9h-1V118.6h-1V118.6h-1V118.9h-1V118.6h-1V118.6h-1V118.9h-1V118.6h-1V118.6h-1V118.6h-1V118.6h-1V118.9h-1V118.6h-1V118.6h-1V118.6h-1V118.9h-1V118.6h-1V118.6h-1V118.9h-1V118.6h-1V118.6h-1V118.6h-1V118.6h-1V118.6h-1V118.6h-1V118.6h-1V118.6h-1V118.6h-1V118.9h-1Z"/>
    <clipPath id="cs"><rect x="265" y="100" width="971" height="570"/></clipPath>
    <clipPath id="cl"><rect x="0" y="100" width="265" height="570"/><rect x="1236" y="100" width="400" height="570"/></clipPath>
  </defs>
  <rect x="23" y="104" width="1554" height="28" fill="#101a21" stroke="#6d6f73" stroke-width="2"/>
    <rect x="23" y="138" width="1554" height="528" fill="#0f131c"/>
  <g fill="#ffffff" fill-opacity="0.02"><rect x="91.5" y="138" width="2" height="528"/><rect x="161.5" y="138" width="2" height="528"/><rect x="231.5" y="138" width="2" height="528"/><rect x="301.5" y="138" width="2" height="528"/><rect x="371.5" y="138" width="2" height="528"/><rect x="441.5" y="138" width="2" height="528"/><rect x="511.5" y="138" width="2" height="528"/><rect x="581.5" y="138" width="2" height="528"/><rect x="651.5" y="138" width="2" height="528"/><rect x="721.5" y="138" width="2" height="528"/><rect x="791.5" y="138" width="2" height="528"/><rect x="861.5" y="138" width="2" height="528"/><rect x="931.5" y="138" width="2" height="528"/><rect x="1001.5" y="138" width="2" height="528"/><rect x="1071.5" y="138" width="2" height="528"/><rect x="1141.5" y="138" width="2" height="528"/><rect x="1211.5" y="138" width="2" height="528"/><rect x="1281.5" y="138" width="2" height="528"/><rect x="1351.5" y="138" width="2" height="528"/><rect x="1421.5" y="138" width="2" height="528"/><rect x="1491.5" y="138" width="2" height="528"/><rect x="1561.5" y="138" width="2" height="528"/><rect x="23" y="185" width="1554" height="2"/><rect x="23" y="233" width="1554" height="2"/><rect x="23" y="281" width="1554" height="2"/><rect x="23" y="329" width="1554" height="2"/><rect x="23" y="377" width="1554" height="2"/><rect x="23" y="425" width="1554" height="2"/><rect x="23" y="473" width="1554" height="2"/><rect x="23" y="521" width="1554" height="2"/><rect x="23" y="569" width="1554" height="2"/><rect x="23" y="617" width="1554" height="2"/></g>
  <rect x="22" y="253" width="2" height="308" fill="#092f3e"/>
  <use href="#wa" fill="#01465a" fill-opacity="0.55"/>
  <use href="#wb" fill="#01465a" fill-opacity="0.55"/>
  <rect x="23" y="397" width="1554" height="1" fill="#004c64"/>
  <use href="#mv" fill="#05465c"/>
  <rect x="265" y="138" width="971" height="528" fill="rgb(38,183,96)" fill-opacity="0.22"/>
  <rect x="266" y="104" width="969" height="28" fill="rgb(38,183,96)" fill-opacity="0.20"/>
  <rect x="265" y="138" width="2" height="528" fill="#71961f"/>
  <rect x="1234" y="138" width="2" height="528" fill="#b00a0a"/>
  <rect x="266" y="104" width="969" height="28" fill="none" stroke="#8a3230" stroke-width="2"/><rect x="265" y="105" width="2" height="26" fill="#7a1616"/>
</svg>

<!-- dialog -->
<div class="dlg">
  <div class="t" style="left:8px;top:11px;font-size:14px;color:#1a1a1a">导出设置</div>
  <svg style="left:558px;top:14px" width="13" height="13" viewBox="0 0 13 13" stroke="#1a1a1a" stroke-width="1.700" stroke-linecap="round"><path d="M1 1l11 11M12 1l-11 11"/></svg>
  <div style="left:3px;top:37px;width:584px;height:1px;background:#e6e8f0"></div>
  <div class="t lb" style="left:6px;top:66px">导出格式</div>
  <div class="sel" style="left:91px;top:60px">MP3<i></i></div>
  <div class="t lb" style="left:6px;top:110px">声道</div>
  <div class="sel" style="left:91px;top:105px">与源音频一致<i></i></div>
  <div class="t lb" style="left:283px;top:66px">采样率</div>
  <div class="sel" style="left:368px;top:60px">与源音频一致<i></i></div>
  <div class="t lb" style="left:283px;top:110px">质量</div>
  <div class="sel" style="left:368px;top:105px">8kbps<i></i></div>
  <div style="left:3px;top:157px;width:584px;height:1px;background:#e6e8f0"></div>
  <div class="t lb" style="left:3px;top:168px">音频名称</div>
  <div class="inp" style="left:88px;top:165px;background:#fff">后陆门的夏_2025060330455_with_bg</div>
  <div class="t lb" style="left:3px;top:202px">导出路径</div>
  <div class="inp" style="left:88px;top:199px;background:#e6e8f0;letter-spacing:.250px">C:\Users\25327\Desktop\全方位音频剪辑</div>
  <svg style="left:427px;top:203px" width="17" height="17" viewBox="0 0 17 17" fill="none" stroke="#222" stroke-width="1.700" stroke-linecap="round" stroke-linejoin="round"><path d="M7.500 2h-5a1.500 1.500 0 0 0-1.500 1.500v11a1.500 1.500 0 0 0 1.500 1.500h11a1.500 1.500 0 0 0 1.500-1.500v-5M8.500 9l7-7.500"/></svg>
  <svg style="left:468px;top:203px" width="17" height="17" viewBox="0 0 17 17" fill="none" stroke="#222" stroke-width="1.700" stroke-linejoin="round"><path d="M1.500 1.500h5.500l1.500 2h7v12h-14z"/><path d="M10.500 12.500h3" stroke-width="2"/></svg>
  <div style="left:497px;top:179px;width:75px;height:31px;border-radius:4px;background:#7ba7f7"></div>
  <svg style="left:513px;top:187px" width="16" height="15" viewBox="0 0 16 15" fill="none" stroke="#fff" stroke-width="1.800" stroke-linecap="round" stroke-linejoin="round"><path d="M8 10v-8.500M4.500 4.500l3.500-3.500 3.500 3.500M1.500 9.500v3a1.500 1.500 0 0 0 1.500 1.500h10a1.500 1.500 0 0 0 1.500-1.500v-3"/></svg>
  <div class="t" style="left:531px;top:185px;font-size:12px;color:#fff">导出</div>
</div>
</body></html>
